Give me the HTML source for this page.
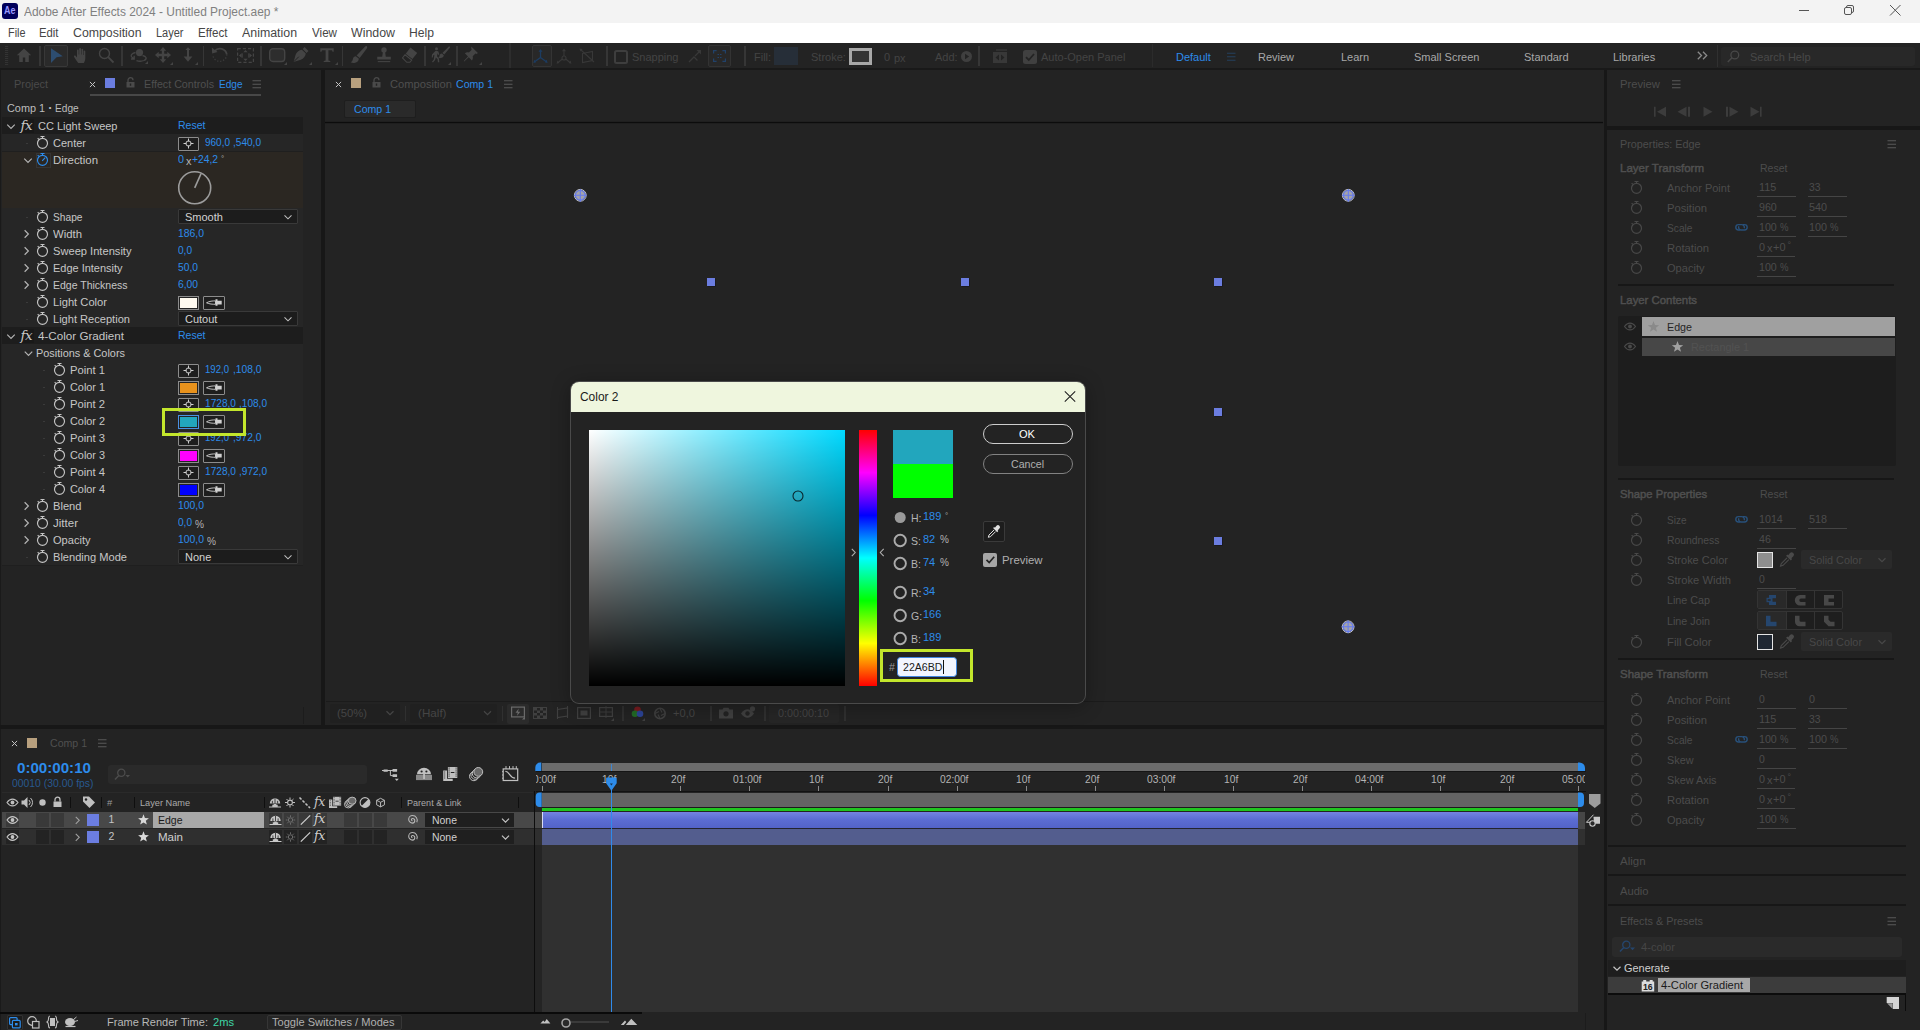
<!DOCTYPE html>
<html lang="en"><head><meta charset="utf-8"><title>Adobe After Effects 2024 - Untitled Project.aep *</title>
<style>
html,body{margin:0;padding:0;}
body{width:1920px;height:1030px;overflow:hidden;background:#232323;position:relative;font-family:"Liberation Sans",sans-serif;font-size:11px;}
#app{position:absolute;left:0;top:0;width:1920px;height:1030px;overflow:hidden;}
#app div,#app span,#app svg{position:absolute;box-sizing:border-box;}
#app svg{overflow:visible;}
.t{white-space:pre;line-height:16px;height:16px;transform-origin:0 50%;transform:scaleX(1);}
.w{white-space:pre;line-height:16px;height:16px;transform-origin:0 50%;}
</style></head><body><div id="app">
<div style="left:0px;top:0px;width:1920px;height:23px;background:#f3f3f3;"></div>
<div style="left:2px;top:3px;width:16px;height:16px;background:#00005b;border-radius:3px;"></div>
<span class="w" style="left:4px;top:3.3000000000000007px;color:#9999ff;font-size:10px;font-weight:700;transform:scaleX(0.9);">Ae</span>
<span class="w" style="left:24px;top:3.5px;color:#808080;font-size:12px;transform:scaleX(0.994);">Adobe After Effects 2024 - Untitled Project.aep *</span>
<svg style="left:1794px;top:0px;" width="120" height="23" viewBox="0 0 120 23"><path d="M5 10.5h10" stroke="#555" stroke-width="1"/><rect x="50.5" y="7.5" width="7" height="7" rx="1.5" fill="none" stroke="#555" stroke-width="1"/><path d="M52.5 7.5v-.5a1.5 1.5 0 0 1 1.5-1.5h4a1.5 1.5 0 0 1 1.5 1.5v4a1.5 1.5 0 0 1-1.5 1.5h-.5" fill="none" stroke="#555" stroke-width="1"/><path d="M96 5l10.5 10.5M106.5 5l-10.5 10.5" stroke="#555" stroke-width="1"/></svg>
<div style="left:0px;top:23px;width:1920px;height:20px;background:#ffffff;"></div>
<span class="w" style="left:7.5px;top:24.5px;color:#464646;font-size:12px;transform:scaleX(0.905);">File</span>
<span class="w" style="left:39px;top:24.5px;color:#464646;font-size:12px;transform:scaleX(0.943);">Edit</span>
<span class="w" style="left:73px;top:24.5px;color:#464646;font-size:12px;transform:scaleX(1.027);">Composition</span>
<span class="w" style="left:156px;top:24.5px;color:#464646;font-size:12px;transform:scaleX(0.916);">Layer</span>
<span class="w" style="left:198px;top:24.5px;color:#464646;font-size:12px;transform:scaleX(0.968);">Effect</span>
<span class="w" style="left:242px;top:24.5px;color:#464646;font-size:12px;transform:scaleX(1.031);">Animation</span>
<span class="w" style="left:312px;top:24.5px;color:#464646;font-size:12px;transform:scaleX(0.969);">View</span>
<span class="w" style="left:351px;top:24.5px;color:#464646;font-size:12px;transform:scaleX(1.031);">Window</span>
<span class="w" style="left:409px;top:24.5px;color:#464646;font-size:12px;transform:scaleX(1.013);">Help</span>
<div style="left:0px;top:43px;width:1920px;height:24.5px;background:#232323;"></div>
<div style="left:0px;top:67.5px;width:1920px;height:2.5px;background:#191919;"></div>
<svg style="left:5px;top:46px;" width="4" height="20" viewBox="0 0 4 20"><path d="M0 .5h3.2M0 2.5h3.2M0 4.5h3.2M0 6.5h3.2M0 8.5h3.2M0 10.5h3.2M0 12.5h3.2M0 14.5h3.2M0 16.5h3.2M0 18.5h3.2" stroke="#333" stroke-width="1"/></svg>
<div style="left:39.25px;top:46px;width:1.5px;height:19.5px;background:#363636;"></div>
<div style="left:121.25px;top:46px;width:1.5px;height:19.5px;background:#363636;"></div>
<div style="left:202.75px;top:46px;width:1.5px;height:19.5px;background:#363636;"></div>
<div style="left:260.25px;top:46px;width:1.5px;height:19.5px;background:#363636;"></div>
<div style="left:341.75px;top:46px;width:1.5px;height:19.5px;background:#363636;"></div>
<div style="left:424.25px;top:46px;width:1.5px;height:19.5px;background:#363636;"></div>
<div style="left:456.25px;top:46px;width:1.5px;height:19.5px;background:#363636;"></div>
<div style="left:606.25px;top:46px;width:1.5px;height:19.5px;background:#363636;"></div>
<div style="left:744.25px;top:46px;width:1.5px;height:19.5px;background:#363636;"></div>
<div style="left:978.25px;top:46px;width:1.5px;height:19.5px;background:#363636;"></div>
<div style="left:509px;top:43px;width:2px;height:24.5px;background:#2d2d2d;"></div>
<svg style="left:16px;top:47px;" width="16" height="16" viewBox="0 0 16 16"><path d="M8 1.5L.8 8.3h2.4V15h3.6v-4.4h2.4V15h3.6V8.3h2.4z" fill="#444444"/></svg>
<div style="left:44px;top:44.5px;width:23.5px;height:22px;background:#2a2a2a;border:1px solid #383838;border-radius:2px;"></div>
<svg style="left:50px;top:47px;" width="14" height="17" viewBox="0 0 14 17"><path d="M1 1.2L12.8 9.2L6.6 10.2L1 16z" fill="#2d4d70"/></svg>
<svg style="left:73px;top:47px;" width="16" height="17" viewBox="0 0 16 17"><path d="M5.2 16c-1.2-1.6-3.2-4.2-4.2-6.2-.5-1 .8-1.9 1.6-1l1.4 1.6V3.4c0-1.2 1.7-1.2 1.7 0V7.6h.5V1.9c0-1.2 1.8-1.2 1.8 0V7.6h.5V2.6c0-1.2 1.7-1.2 1.7 0v5.4h.5V4.4c0-1.2 1.6-1.2 1.6 0v6.6c0 2-.7 3.6-1.5 5z" fill="#444444"/></svg>
<svg style="left:98px;top:47px;" width="17" height="17" viewBox="0 0 17 17"><circle cx="6.5" cy="6.5" r="5" fill="none" stroke="#444444" stroke-width="1.4"/><path d="M10.2 10.2l5.3 5.3" stroke="#444444" stroke-width="1.8"/></svg>
<svg style="left:129px;top:48px;" width="19" height="16" viewBox="0 0 19 16"><circle cx="10.5" cy="4.6" r="3.6" fill="#444444"/><path d="M6.5 4.5C2.5 5.5 1 7.5 3 9.3l2.2 1.5M5.2 7.8v3.2H2" fill="none" stroke="#444444" stroke-width="1.3"/><path d="M13.5 7.5c4 .6 5 3.5 1.5 5-2 .8-5.5.8-7.5.2" fill="none" stroke="#444444" stroke-width="1.3"/><path d="M19 16v-3l-3 3z" fill="#444444"/></svg>
<svg style="left:155px;top:47px;" width="18" height="18" viewBox="0 0 18 18"><path d="M8 0l3.200 3.700H9.200v3.100h3.100V4.800L16 8l-3.700 3.200V9.200H9.200v3.100h2L8 16l-3.200-3.700h2V9.200H3.700v2L0 8l3.700-3.200v2h3.100V3.700h-2z" fill="#444444"/><path d="M18 18v-3l-3 3z" fill="#444444"/></svg>
<svg style="left:181px;top:47px;" width="17" height="18" viewBox="0 0 17 18"><path d="M7 .3l2.600 2.700H8v6.400h3.400L7 14.800 2.600 9.400H6V3H4.400z" fill="#444444"/><path d="M17 18v-3l-3 3z" fill="#444444"/></svg>
<svg style="left:211px;top:46px;" width="18" height="18" viewBox="0 0 18 18"><path d="M3.600 5A7 7 0 0 1 15.800 8.500" fill="none" stroke="#444444" stroke-width="1.700"/><path d="M15.800 8.500a7 7 0 0 1-13.800 1.500" fill="none" stroke="#3a3a3a" stroke-width="1.300" stroke-dasharray="1.300 1.700"/><path d="M.8 1.600l.4 6 5.400-1.600z" fill="#444444"/></svg>
<svg style="left:237px;top:48px;" width="17" height="15" viewBox="0 0 17 15"><rect x=".6" y=".6" width="15.800" height="13.800" fill="none" stroke="#444444" stroke-width="1.200" stroke-dasharray="3.200 2"/><path d="M8.500 2l2.200 2.300h-4.400zM8.500 13l2.200-2.300h-4.400zM2 7.500l2.600-2.200v4.400zM15 7.500l-2.600-2.200v4.400z" fill="#444444"/><path d="M5.200 5.300v4.400M11.800 5.300v4.400" stroke="#444444" stroke-width="1"/></svg>
<svg style="left:269px;top:48px;" width="18" height="17" viewBox="0 0 18 17"><rect x=".7" y=".7" width="15" height="12.800" rx="3.200" fill="#2d2d2d" stroke="#444444" stroke-width="1.400"/><path d="M18 17v-3l-3 3z" fill="#444444"/></svg>
<svg style="left:293px;top:46px;" width="19" height="19" viewBox="0 0 19 19"><path d="M11.6 1l3.9 3.9-2 2-3.9-3.9z" fill="#444444"/><path d="M8.9 3.7l3.9 3.9c-.4 3-2.2 5.2-5 6.2L.6 15.9l2-7.1c1-2.8 3.2-4.6 6.3-5.1z" fill="#444444"/><path d="M.8 15.7l5-5" stroke="#232323" stroke-width="1"/><path d="M19 19v-3l-3 3z" fill="#444444"/></svg>
<svg style="left:320px;top:48px;" width="18" height="17" viewBox="0 0 18 17"><path d="M.3 .3h13.400v3.400h-1.200l-.5-1.400H8.400v10.200l1.900.5v1.100H3.700v-1.100l1.900-.5V2.300H2l-.5 1.400H.3z" fill="#444444"/><path d="M18 17v-3l-3 3z" fill="#444444"/></svg>
<svg style="left:350px;top:46px;" width="18" height="18" viewBox="0 0 18 18"><path d="M16.800.3c.7.600.5 1.400 0 2.100L9.700 12.100 6.600 9.500 14.900.8c.600-.700 1.300-.900 1.900-.5z" fill="#444444"/><path d="M5.800 10.200l3.100 2.600c-.3 2.400-2.200 3.900-4.600 4.100-1.300.1-2.600-.1-3.700-.7 1.400-.6 2-1.700 2.200-3 .2-1.700 1.400-2.900 3-3z" fill="#444444"/></svg>
<svg style="left:376px;top:47px;" width="16" height="17" viewBox="0 0 16 17"><circle cx="8" cy="3" r="2.700" fill="#444444"/><path d="M6.900 5h2.200l.7 4.700h5v2.900H1.200V9.700h5z" fill="#444444"/><path d="M1.800 14.600h12.400" stroke="#444444" stroke-width="1.100"/></svg>
<svg style="left:401px;top:47px;" width="17" height="16" viewBox="0 0 17 16"><path d="M9.500.6l6.700 5.300-4.800 6.200L4.700 6.800z" fill="#444444"/><path d="M4 7.700l6.700 5.300-1.800 2.300H5.800L1.500 11z" fill="none" stroke="#444444" stroke-width="1.100"/></svg>
<svg style="left:431px;top:46px;" width="20" height="19" viewBox="0 0 20 19"><circle cx="5.500" cy="2.800" r="1.500" fill="#444444"/><path d="M4.600 4.800l2.600.4 1.200 3.200-1 .5-.8-1.600-.6 3 2 2.400.3 3.600h-1.400l-.3-3-1.800-1.800-.7 2.600-2.100 2.400-1-.8 1.800-2.200.6-4.800-1.300.7-.3 2.200-1.100-.1.300-2.900z" fill="#444444"/><path d="M18.800.6c.5.500.3 1-.1 1.500l-5.400 6.300-1.900-1.500L17.500.8c.4-.4.900-.6 1.300-.2z" fill="#444444"/><path d="M10.900 7.600l1.900 1.600c-.2 1.700-1.500 2.700-3.100 2.900-.9.100-1.800-.1-2.600-.5 1-.4 1.400-1.200 1.500-2.100.2-1.100 1-1.900 2.300-1.900z" fill="#444444"/><path d="M20 19v-3l-3 3z" fill="#444444"/></svg>
<svg style="left:463px;top:46px;" width="19" height="19" viewBox="0 0 19 19"><path d="M8.300.6l6.600 6.500-1.200.8-1.300-.4-2.700 2.800c.5 1.500.2 2.900-.8 4.100L5.700 11.200 1.200 15.500l-.5-.5L5 10.500 1.800 7.300c1.200-1 2.600-1.300 4.100-.8l2.800-2.700-.4-1.300z" fill="#444444"/><path d="M19 19v-3l-3 3z" fill="#444444"/></svg>
<div style="left:531.5px;top:44.5px;width:20px;height:22px;background:#282828;border:1px solid #343434;border-radius:2px;"></div>
<svg style="left:533px;top:49px;" width="15" height="15" viewBox="0 0 15 15"><path d="M7.500 1.500v7M7.500 8.500l-5.500 4M7.500 8.500l5.500 4" stroke="#1c3c62" stroke-width="1.300" fill="none"/><path d="M7.500 0l2 2.800H5.500zM.4 14l.9-3.300 2 2.500zM14.600 14l-.9-3.300-2 2.500z" fill="#1c3c62"/></svg>
<svg style="left:556px;top:48px;" width="16" height="18" viewBox="0 0 16 18"><g transform="translate(0 0.5)"><path d="M8 1.500v6M6.300 10.500l-4.300 3.500M9.700 10.500l4.300 3.500" stroke="#383838" stroke-width="1.100" fill="none"/><circle cx="8" cy="9.500" r="2" fill="none" stroke="#383838" stroke-width="1.100"/><path d="M8 0l2 2.800H6zM.6 15.200l.8-3.300 2 2.500zM15.400 15.200l-.8-3.300-2 2.500z" fill="#383838"/></g></svg>
<svg style="left:579px;top:48px;" width="17" height="17" viewBox="0 0 17 17"><path d="M3.500 5.500l10-2v9l-10 2z" fill="none" stroke="#383838" stroke-width="1.100"/><path d="M1.500 1.500l13.500 12.500" stroke="#383838" stroke-width="1.100"/><path d="M.5.500l3.200.6-2.400 2.400z" fill="#383838"/></svg>
<div style="left:614px;top:50px;width:13.5px;height:13.5px;border:2px solid #3e3e3e;border-radius:2.500px;"></div>
<span class="t" style="left:632px;top:49.0px;color:#444;">Snapping</span>
<svg style="left:688px;top:49px;" width="14" height="14" viewBox="0 0 14 14"><path d="M1 13l5-5 3.500 3.500" fill="none" stroke="#383838" stroke-width="1.300"/><path d="M7 7l5-5" stroke="#383838" stroke-width="1.300"/><path d="M13 1v4.500L8.500 1z" fill="#383838"/></svg>
<div style="left:708px;top:45px;width:22.5px;height:22px;background:#282828;border:1px solid #333;border-radius:2px;"></div>
<svg style="left:713px;top:50px;" width="13" height="12" viewBox="0 0 13 12"><path d="M.6 3.500V.6h3M9.400.6h3v2.900M12.400 8.500v2.900h-3M3.600 11.400h-3V8.500" fill="none" stroke="#21426a" stroke-width="1.200"/><path d="M4.500 4.500h1.500M7 4.500h1.500M4.500 7.500h1.500M7 7.500h1.500" stroke="#21426a" stroke-width="1.200"/></svg>
<span class="t" style="left:754px;top:49.0px;color:#444;">Fill:</span>
<div style="left:774px;top:47px;width:24px;height:18px;background:#262e38;"></div>
<span class="t" style="left:811px;top:49.0px;color:#444;">Stroke:</span>
<div style="left:849px;top:48px;width:23px;height:17px;background:#343434;border:3px solid #a8a8a8;"></div>
<span class="t" style="left:884px;top:48.5px;color:#444;">0</span>
<span class="t" style="left:894px;top:49.5px;color:#444;">px</span>
<span class="t" style="left:935px;top:49.0px;color:#444;">Add:</span>
<svg style="left:961px;top:51px;" width="12" height="12" viewBox="0 0 12 12"><circle cx="5.500" cy="5.500" r="5.500" fill="#3f3f3f"/><path d="M4 2.800v5.400l4.200-2.700z" fill="#232323"/></svg>
<svg style="left:993px;top:49px;" width="14" height="14" viewBox="0 0 14 14"><path d="M0 3h14v11H0z" fill="#383838"/><path d="M3 0h11v2H3z" fill="#303030"/><path d="M6 5.500v6L2.500 8.500zM8 5.500v6l3.500-3z" fill="#232323"/></svg>
<div style="left:1023px;top:50px;width:14px;height:14px;background:#404040;border-radius:2.500px;"></div>
<svg style="left:1023px;top:50px;" width="14" height="14" viewBox="0 0 14 14"><path d="M3 7.200l2.800 2.800 5.200-6" fill="none" stroke="#232323" stroke-width="1.800"/></svg>
<span class="t" style="left:1041px;top:49.0px;color:#444;">Auto-Open Panel</span>
<div style="left:1152px;top:44px;width:1px;height:23px;background:#2b2b2b;"></div>
<span class="t" style="left:1176px;top:49.0px;color:#2d8ceb;">Default</span>
<svg style="left:1227px;top:52px;" width="9" height="10" viewBox="0 0 9 10"><g transform="translate(0 0.3)"><path d="M0 1h8.5M0 4.5h8.5M0 8h8.5" stroke="#24405e" stroke-width="1.1"/></g></svg>
<span class="t" style="left:1258px;top:49.0px;color:#a8a8a8;">Review</span>
<span class="t" style="left:1341px;top:49.0px;color:#a8a8a8;">Learn</span>
<span class="t" style="left:1414px;top:49.0px;color:#a8a8a8;">Small Screen</span>
<span class="t" style="left:1524px;top:49.0px;color:#a8a8a8;">Standard</span>
<span class="t" style="left:1613px;top:49.0px;color:#a8a8a8;">Libraries</span>
<svg style="left:1697px;top:51px;" width="11" height="9" viewBox="0 0 11 9"><path d="M.8.800l3.700 3.700-3.700 3.700M6 .800l3.700 3.700L6 8.200" fill="none" stroke="#8a8a8a" stroke-width="1.300"/></svg>
<div style="left:1716.5px;top:45px;width:1.5px;height:22px;background:#303030;"></div>
<div style="left:1721px;top:47px;width:194px;height:19px;background:#282828;border-radius:3px;"></div>
<svg style="left:1727px;top:50px;" width="13" height="13" viewBox="0 0 13 13"><circle cx="7.800" cy="5" r="3.900" fill="none" stroke="#484848" stroke-width="1.300"/><path d="M5 7.800L.8 12" stroke="#484848" stroke-width="1.500"/></svg>
<span class="t" style="left:1750px;top:49.0px;color:#484848;">Search Help</span>
<div style="left:0px;top:70px;width:1px;height:655px;background:#1a1a1a;"></div>
<div style="left:321px;top:70px;width:4px;height:655px;background:#171717;"></div>
<span class="t" style="left:14px;top:76.0px;color:#4a4a4a;transform:scaleX(0.993);">Project</span>
<svg style="left:89px;top:81px;" width="7" height="7" viewBox="0 0 7 7"><g transform="translate(0.5 0.5)"><path d="M.4 .4l5.200 5.200M5.600 .4L.4 5.600" stroke="#c4c4c4" stroke-width="1"/></g></svg>
<div style="left:105px;top:78px;width:10px;height:10px;background:#6b7de0;"></div>
<svg style="left:126px;top:77px;" width="9" height="11" viewBox="0 0 9 11"><path d="M2 5V3.200a2.500 2.500 0 0 1 5 0" fill="none" stroke="#4a4a4a" stroke-width="1.300"/><path d="M.5 5h8v5.500h-8z" fill="#4a4a4a"/><path d="M3.800 6.500h1.400v2.300H3.800z" fill="#232323"/></svg>
<span class="t" style="left:144px;top:76.0px;color:#4f4f4f;transform:scaleX(0.973);">Effect Controls</span>
<span class="t" style="left:218.5px;top:76.0px;color:#2d8ceb;transform:scaleX(0.915);">Edge</span>
<svg style="left:252px;top:79px;" width="9" height="10" viewBox="0 0 9 10"><g transform="translate(0.5 0.8)"><path d="M0 1h8.5M0 4.5h8.5M0 8h8.5" stroke="#5a5a5a" stroke-width="1.1"/></g></svg>
<div style="left:90px;top:94px;width:171px;height:2px;background:#484848;"></div>
<span class="t" style="left:7px;top:100.0px;color:#bdbdbd;transform:scaleX(0.987);">Comp 1</span>
<span class="t" style="left:48.3px;top:99.5px;color:#bdbdbd;font-size:13px;font-weight:700;">·</span>
<span class="t" style="left:55px;top:100.0px;color:#bdbdbd;transform:scaleX(0.923);">Edge</span>
<div style="left:2px;top:117.4px;width:301px;height:448.6px;background:#1f1f1f;"></div>
<div style="left:2px;top:117.4px;width:301px;height:17px;background:#1d1d1d;"></div>
<svg style="left:6px;top:123px;" width="10" height="7" viewBox="0 0 10 7"><g transform="translate(0.25 0.625)"><path d="M1 1l3.75 3.75l3.75 -3.75" fill="none" stroke="#b4b4b4" stroke-width="1.2"/></g></svg>
<div style="left:19.5px;top:119px;width:14px;height:13.5px;background:#191919;"></div>
<span class="w" style="left:20.5px;top:116.5px;color:#c8c8c8;font-family:'DejaVu Serif',serif;font-style:italic;font-size:13.5px;letter-spacing:-0.4px;line-height:16px;">fx</span>
<span class="t" style="left:38px;top:118.0px;color:#c6c6c6;">CC Light Sweep</span>
<span class="t" style="left:178px;top:117.4px;color:#2d8ceb;transform:scaleX(0.957);">Reset</span>
<div style="left:2px;top:134.4px;width:301px;height:16.3px;background:#262626;"></div>
<div style="left:26.3px;top:142.8px;width:1.5px;height:1.5px;background:#3a3a3a;"></div>
<svg style="left:35px;top:135px;" width="15" height="16" viewBox="0 0 15 16"><g transform="translate(0.5 0)"><circle cx="7" cy="8.300" r="5" fill="none" stroke="#c4c4c4" stroke-width="1.15"/><path d="M5 1.500h4M7 1.500v1.900" stroke="#c4c4c4" stroke-width="1.15" fill="none"/><path d="M2.200 3.200l1.100 1.100" stroke="#c4c4c4" stroke-width="1.15" fill="none"/></g></svg>
<span class="t" style="left:53px;top:135.0px;color:#c6c6c6;">Center</span>
<div style="left:177.5px;top:136.5px;width:21.5px;height:14px;background:#1e1e1e;border:1px solid #8c8c8c;border-radius:1px;"></div>
<svg style="left:183px;top:138px;" width="11" height="11" viewBox="0 0 11 11"><g transform="translate(0.0 0.5)"><circle cx="5.500" cy="5" r="2.600" fill="none" stroke="#d0d0d0" stroke-width="1"/><path d="M5.500 0v3M5.500 7v3M.5 5h3M7.500 5h3" stroke="#d0d0d0" stroke-width="1"/></g></svg>
<span class="t" style="left:205px;top:133.9px;color:#2d8ceb;transform:scaleX(0.908);">960,0</span>
<span class="t" style="left:233px;top:133.9px;color:#2d8ceb;transform:scaleX(0.916);">,540,0</span>
<div style="left:2px;top:152px;width:301px;height:56.5px;background:#2b2722;"></div>
<svg style="left:23px;top:157px;" width="10" height="7" viewBox="0 0 10 7"><g transform="translate(0.25 0.625)"><path d="M1 1l3.75 3.75l3.75 -3.75" fill="none" stroke="#b4b4b4" stroke-width="1.2"/></g></svg>
<div style="left:35.5px;top:152.5px;width:15px;height:15px;border:1px solid #353535;"></div>
<svg style="left:35px;top:152px;" width="15" height="16" viewBox="0 0 15 16"><g transform="translate(0.5 0)"><circle cx="7" cy="8.300" r="5" fill="none" stroke="#2d8ceb" stroke-width="1.15"/><path d="M5 1.500h4M7 1.500v1.900" stroke="#2d8ceb" stroke-width="1.15" fill="none"/><path d="M2.200 3.200l1.100 1.100" stroke="#2d8ceb" stroke-width="1.15" fill="none"/></g></svg>
<svg style="left:39px;top:157px;" width="8" height="8" viewBox="0 0 8 8"><path d="M3.200 3.900l3-3.200" stroke="#2d8ceb" stroke-width="1.100"/></svg>
<span class="t" style="left:53px;top:152.0px;color:#c6c6c6;transform:scaleX(1.037);">Direction</span>
<span class="t" style="left:178px;top:150.9px;color:#2d8ceb;transform:scaleX(0.981);">0</span>
<span class="t" style="left:186px;top:152.5px;color:#b4b4b4;">x</span>
<span class="t" style="left:192px;top:150.9px;color:#2d8ceb;transform:scaleX(0.934);">+24,2</span>
<span class="t" style="left:221px;top:151.0px;color:#b4b4b4;font-size:8px;">°</span>
<svg style="left:177px;top:170px;" width="36" height="36" viewBox="0 0 36 36"><circle cx="17.700" cy="17.800" r="16" fill="none" stroke="#9c9c9c" stroke-width="1.600"/><path d="M17.700 17.800L24.05 3.66" stroke="#9c9c9c" stroke-width="1.600"/></svg>
<div style="left:2px;top:208.4px;width:301px;height:16.3px;background:#262626;"></div>
<div style="left:26.3px;top:216.8px;width:1.5px;height:1.5px;background:#3a3a3a;"></div>
<svg style="left:35px;top:209px;" width="15" height="16" viewBox="0 0 15 16"><g transform="translate(0.5 0)"><circle cx="7" cy="8.300" r="5" fill="none" stroke="#c4c4c4" stroke-width="1.15"/><path d="M5 1.500h4M7 1.500v1.900" stroke="#c4c4c4" stroke-width="1.15" fill="none"/><path d="M2.200 3.200l1.100 1.100" stroke="#c4c4c4" stroke-width="1.15" fill="none"/></g></svg>
<span class="t" style="left:53px;top:209.0px;color:#c6c6c6;transform:scaleX(0.927);">Shape</span>
<div style="left:177.5px;top:209.2px;width:120px;height:15.3px;background:#1c1c1c;border:1px solid #393939;border-radius:1px;"></div>
<span class="t" style="left:185.0px;top:209.0px;color:#d2d2d2;">Smooth</span>
<svg style="left:283px;top:214px;" width="10" height="6" viewBox="0 0 10 6"><g transform="translate(0.5 0.35)"><path d="M1 1l3.5 3.5l3.5 -3.5" fill="none" stroke="#c0c0c0" stroke-width="1.05"/></g></svg>
<div style="left:2px;top:225.4px;width:301px;height:16.3px;background:#262626;"></div>
<svg style="left:23px;top:229px;" width="7" height="10" viewBox="0 0 7 10"><g transform="translate(0.625 0.25)"><path d="M1 1l3.75 3.75l-3.75 3.75" fill="none" stroke="#b4b4b4" stroke-width="1.2"/></g></svg>
<svg style="left:35px;top:226px;" width="15" height="16" viewBox="0 0 15 16"><g transform="translate(0.5 0)"><circle cx="7" cy="8.300" r="5" fill="none" stroke="#c4c4c4" stroke-width="1.15"/><path d="M5 1.500h4M7 1.500v1.900" stroke="#c4c4c4" stroke-width="1.15" fill="none"/><path d="M2.200 3.200l1.100 1.100" stroke="#c4c4c4" stroke-width="1.15" fill="none"/></g></svg>
<span class="t" style="left:53px;top:226.0px;color:#c6c6c6;transform:scaleX(1.031);">Width</span>
<span class="t" style="left:178px;top:224.9px;color:#2d8ceb;transform:scaleX(0.945);">186,0</span>
<div style="left:2px;top:242.4px;width:301px;height:16.3px;background:#262626;"></div>
<svg style="left:23px;top:246px;" width="7" height="10" viewBox="0 0 7 10"><g transform="translate(0.625 0.25)"><path d="M1 1l3.75 3.75l-3.75 3.75" fill="none" stroke="#b4b4b4" stroke-width="1.2"/></g></svg>
<svg style="left:35px;top:243px;" width="15" height="16" viewBox="0 0 15 16"><g transform="translate(0.5 0)"><circle cx="7" cy="8.300" r="5" fill="none" stroke="#c4c4c4" stroke-width="1.15"/><path d="M5 1.500h4M7 1.500v1.900" stroke="#c4c4c4" stroke-width="1.15" fill="none"/><path d="M2.200 3.200l1.100 1.100" stroke="#c4c4c4" stroke-width="1.15" fill="none"/></g></svg>
<span class="t" style="left:53px;top:243.0px;color:#c6c6c6;transform:scaleX(1.011);">Sweep Intensity</span>
<span class="t" style="left:178px;top:241.9px;color:#2d8ceb;transform:scaleX(0.916);">0,0</span>
<div style="left:2px;top:259.4px;width:301px;height:16.3px;background:#262626;"></div>
<svg style="left:23px;top:263px;" width="7" height="10" viewBox="0 0 7 10"><g transform="translate(0.625 0.25)"><path d="M1 1l3.75 3.75l-3.75 3.75" fill="none" stroke="#b4b4b4" stroke-width="1.2"/></g></svg>
<svg style="left:35px;top:260px;" width="15" height="16" viewBox="0 0 15 16"><g transform="translate(0.5 0)"><circle cx="7" cy="8.300" r="5" fill="none" stroke="#c4c4c4" stroke-width="1.15"/><path d="M5 1.500h4M7 1.500v1.900" stroke="#c4c4c4" stroke-width="1.15" fill="none"/><path d="M2.200 3.200l1.100 1.100" stroke="#c4c4c4" stroke-width="1.15" fill="none"/></g></svg>
<span class="t" style="left:53px;top:260.0px;color:#c6c6c6;transform:scaleX(0.997);">Edge Intensity</span>
<span class="t" style="left:178px;top:258.9px;color:#2d8ceb;transform:scaleX(0.934);">50,0</span>
<div style="left:2px;top:276.4px;width:301px;height:16.3px;background:#262626;"></div>
<svg style="left:23px;top:280px;" width="7" height="10" viewBox="0 0 7 10"><g transform="translate(0.625 0.25)"><path d="M1 1l3.75 3.75l-3.75 3.75" fill="none" stroke="#b4b4b4" stroke-width="1.2"/></g></svg>
<svg style="left:35px;top:277px;" width="15" height="16" viewBox="0 0 15 16"><g transform="translate(0.5 0)"><circle cx="7" cy="8.300" r="5" fill="none" stroke="#c4c4c4" stroke-width="1.15"/><path d="M5 1.500h4M7 1.500v1.900" stroke="#c4c4c4" stroke-width="1.15" fill="none"/><path d="M2.200 3.200l1.100 1.100" stroke="#c4c4c4" stroke-width="1.15" fill="none"/></g></svg>
<span class="t" style="left:53px;top:277.0px;color:#c6c6c6;transform:scaleX(0.954);">Edge Thickness</span>
<span class="t" style="left:178px;top:275.9px;color:#2d8ceb;transform:scaleX(0.934);">6,00</span>
<div style="left:2px;top:293.4px;width:301px;height:16.3px;background:#262626;"></div>
<div style="left:26.3px;top:301.8px;width:1.5px;height:1.5px;background:#3a3a3a;"></div>
<svg style="left:35px;top:294px;" width="15" height="16" viewBox="0 0 15 16"><g transform="translate(0.5 0)"><circle cx="7" cy="8.300" r="5" fill="none" stroke="#c4c4c4" stroke-width="1.15"/><path d="M5 1.500h4M7 1.500v1.900" stroke="#c4c4c4" stroke-width="1.15" fill="none"/><path d="M2.200 3.200l1.100 1.100" stroke="#c4c4c4" stroke-width="1.15" fill="none"/></g></svg>
<span class="t" style="left:53px;top:294.0px;color:#c6c6c6;transform:scaleX(1.015);">Light Color</span>
<div style="left:177.5px;top:295.5px;width:21.5px;height:14px;background:#fffaf0;border:1px solid #8c8c8c;box-shadow:inset 0 0 0 1px #232323;"></div>
<div style="left:203px;top:295.5px;width:22px;height:14px;background:#1e1e1e;border:1px solid #8c8c8c;border-radius:1px;"></div>
<svg style="left:205px;top:298px;" width="18" height="9" viewBox="0 0 18 9"><g transform="translate(0.5 0.5)"><path d="M1 4.300C4 2.600 7 2.400 10 2.400v3.400C7 5.800 4 5.600 1 4.300z" fill="none" stroke="#d0d0d0" stroke-width=".9"/><path d="M10 .800h2v6.500h-2zM12 2.200h4.200v3.800H12z" fill="#d0d0d0"/></g></svg>
<div style="left:2px;top:310.4px;width:301px;height:16.3px;background:#262626;"></div>
<div style="left:26.3px;top:318.8px;width:1.5px;height:1.5px;background:#3a3a3a;"></div>
<svg style="left:35px;top:311px;" width="15" height="16" viewBox="0 0 15 16"><g transform="translate(0.5 0)"><circle cx="7" cy="8.300" r="5" fill="none" stroke="#c4c4c4" stroke-width="1.15"/><path d="M5 1.500h4M7 1.500v1.900" stroke="#c4c4c4" stroke-width="1.15" fill="none"/><path d="M2.200 3.200l1.100 1.100" stroke="#c4c4c4" stroke-width="1.15" fill="none"/></g></svg>
<span class="t" style="left:53px;top:311.0px;color:#c6c6c6;transform:scaleX(1.007);">Light Reception</span>
<div style="left:177.5px;top:311.2px;width:120px;height:15.3px;background:#1c1c1c;border:1px solid #393939;border-radius:1px;"></div>
<span class="t" style="left:185.0px;top:311.0px;color:#d2d2d2;">Cutout</span>
<svg style="left:283px;top:316px;" width="10" height="6" viewBox="0 0 10 6"><g transform="translate(0.5 0.35)"><path d="M1 1l3.5 3.5l3.5 -3.5" fill="none" stroke="#c0c0c0" stroke-width="1.05"/></g></svg>
<div style="left:2px;top:327.4px;width:301px;height:17px;background:#1d1d1d;"></div>
<svg style="left:6px;top:333px;" width="10" height="7" viewBox="0 0 10 7"><g transform="translate(0.25 0.625)"><path d="M1 1l3.75 3.75l3.75 -3.75" fill="none" stroke="#b4b4b4" stroke-width="1.2"/></g></svg>
<div style="left:19.5px;top:329px;width:14px;height:13.5px;background:#191919;"></div>
<span class="w" style="left:20.5px;top:326.5px;color:#c8c8c8;font-family:'DejaVu Serif',serif;font-style:italic;font-size:13.5px;letter-spacing:-0.4px;line-height:16px;">fx</span>
<span class="t" style="left:38px;top:328.0px;color:#c6c6c6;transform:scaleX(1.058);">4-Color Gradient</span>
<span class="t" style="left:178px;top:327.4px;color:#2d8ceb;transform:scaleX(0.957);">Reset</span>
<div style="left:2px;top:344.4px;width:301px;height:16.3px;background:#262626;"></div>
<svg style="left:23px;top:350px;" width="11" height="7" viewBox="0 0 11 7"><g transform="translate(0.75 0.625)"><path d="M1 1l3.75 3.75l3.75 -3.75" fill="none" stroke="#b4b4b4" stroke-width="1.2"/></g></svg>
<span class="t" style="left:35.5px;top:345.0px;color:#c6c6c6;transform:scaleX(0.99);">Positions &amp; Colors</span>
<div style="left:2px;top:361.4px;width:301px;height:16.3px;background:#262626;"></div>
<div style="left:43.3px;top:369.8px;width:1.5px;height:1.5px;background:#3a3a3a;"></div>
<svg style="left:52px;top:362px;" width="15" height="16" viewBox="0 0 15 16"><g transform="translate(0.5 0)"><circle cx="7" cy="8.300" r="5" fill="none" stroke="#c4c4c4" stroke-width="1.15"/><path d="M5 1.500h4M7 1.500v1.900" stroke="#c4c4c4" stroke-width="1.15" fill="none"/><path d="M2.200 3.200l1.100 1.100" stroke="#c4c4c4" stroke-width="1.15" fill="none"/></g></svg>
<span class="t" style="left:70px;top:362.0px;color:#c6c6c6;transform:scaleX(1.022);">Point 1</span>
<div style="left:177.5px;top:363.5px;width:21.5px;height:14px;background:#1e1e1e;border:1px solid #8c8c8c;border-radius:1px;"></div>
<svg style="left:183px;top:365px;" width="11" height="11" viewBox="0 0 11 11"><g transform="translate(0.0 0.5)"><circle cx="5.500" cy="5" r="2.600" fill="none" stroke="#d0d0d0" stroke-width="1"/><path d="M5.500 0v3M5.500 7v3M.5 5h3M7.500 5h3" stroke="#d0d0d0" stroke-width="1"/></g></svg>
<span class="t" style="left:205px;top:360.9px;color:#2d8ceb;transform:scaleX(0.872);">192,0</span>
<span class="t" style="left:232.5px;top:360.9px;color:#2d8ceb;transform:scaleX(0.932);">,108,0</span>
<div style="left:2px;top:395.4px;width:301px;height:16.3px;background:#262626;"></div>
<div style="left:43.3px;top:403.8px;width:1.5px;height:1.5px;background:#3a3a3a;"></div>
<svg style="left:52px;top:396px;" width="15" height="16" viewBox="0 0 15 16"><g transform="translate(0.5 0)"><circle cx="7" cy="8.300" r="5" fill="none" stroke="#c4c4c4" stroke-width="1.15"/><path d="M5 1.500h4M7 1.500v1.900" stroke="#c4c4c4" stroke-width="1.15" fill="none"/><path d="M2.200 3.200l1.100 1.100" stroke="#c4c4c4" stroke-width="1.15" fill="none"/></g></svg>
<span class="t" style="left:70px;top:396.0px;color:#c6c6c6;transform:scaleX(1.022);">Point 2</span>
<div style="left:177.5px;top:397.5px;width:21.5px;height:14px;background:#1e1e1e;border:1px solid #8c8c8c;border-radius:1px;"></div>
<svg style="left:183px;top:399px;" width="11" height="11" viewBox="0 0 11 11"><g transform="translate(0.0 0.5)"><circle cx="5.500" cy="5" r="2.600" fill="none" stroke="#d0d0d0" stroke-width="1"/><path d="M5.500 0v3M5.500 7v3M.5 5h3M7.500 5h3" stroke="#d0d0d0" stroke-width="1"/></g></svg>
<span class="t" style="left:205px;top:394.9px;color:#2d8ceb;transform:scaleX(0.921);">1728,0</span>
<span class="t" style="left:239px;top:394.9px;color:#2d8ceb;transform:scaleX(0.916);">,108,0</span>
<div style="left:2px;top:429.4px;width:301px;height:16.3px;background:#262626;"></div>
<div style="left:43.3px;top:437.8px;width:1.5px;height:1.5px;background:#3a3a3a;"></div>
<svg style="left:52px;top:430px;" width="15" height="16" viewBox="0 0 15 16"><g transform="translate(0.5 0)"><circle cx="7" cy="8.300" r="5" fill="none" stroke="#c4c4c4" stroke-width="1.15"/><path d="M5 1.500h4M7 1.500v1.900" stroke="#c4c4c4" stroke-width="1.15" fill="none"/><path d="M2.200 3.200l1.100 1.100" stroke="#c4c4c4" stroke-width="1.15" fill="none"/></g></svg>
<span class="t" style="left:70px;top:430.0px;color:#c6c6c6;transform:scaleX(1.022);">Point 3</span>
<div style="left:177.5px;top:431.5px;width:21.5px;height:14px;background:#1e1e1e;border:1px solid #8c8c8c;border-radius:1px;"></div>
<svg style="left:183px;top:433px;" width="11" height="11" viewBox="0 0 11 11"><g transform="translate(0.0 0.5)"><circle cx="5.500" cy="5" r="2.600" fill="none" stroke="#d0d0d0" stroke-width="1"/><path d="M5.500 0v3M5.500 7v3M.5 5h3M7.500 5h3" stroke="#d0d0d0" stroke-width="1"/></g></svg>
<span class="t" style="left:205px;top:428.9px;color:#2d8ceb;transform:scaleX(0.872);">192,0</span>
<span class="t" style="left:232.5px;top:428.9px;color:#2d8ceb;transform:scaleX(0.932);">,972,0</span>
<div style="left:2px;top:463.4px;width:301px;height:16.3px;background:#262626;"></div>
<div style="left:43.3px;top:471.8px;width:1.5px;height:1.5px;background:#3a3a3a;"></div>
<svg style="left:52px;top:464px;" width="15" height="16" viewBox="0 0 15 16"><g transform="translate(0.5 0)"><circle cx="7" cy="8.300" r="5" fill="none" stroke="#c4c4c4" stroke-width="1.15"/><path d="M5 1.500h4M7 1.500v1.900" stroke="#c4c4c4" stroke-width="1.15" fill="none"/><path d="M2.200 3.200l1.100 1.100" stroke="#c4c4c4" stroke-width="1.15" fill="none"/></g></svg>
<span class="t" style="left:70px;top:464.0px;color:#c6c6c6;transform:scaleX(1.022);">Point 4</span>
<div style="left:177.5px;top:465.5px;width:21.5px;height:14px;background:#1e1e1e;border:1px solid #8c8c8c;border-radius:1px;"></div>
<svg style="left:183px;top:467px;" width="11" height="11" viewBox="0 0 11 11"><g transform="translate(0.0 0.5)"><circle cx="5.500" cy="5" r="2.600" fill="none" stroke="#d0d0d0" stroke-width="1"/><path d="M5.500 0v3M5.500 7v3M.5 5h3M7.500 5h3" stroke="#d0d0d0" stroke-width="1"/></g></svg>
<span class="t" style="left:205px;top:462.9px;color:#2d8ceb;transform:scaleX(0.921);">1728,0</span>
<span class="t" style="left:239px;top:462.9px;color:#2d8ceb;transform:scaleX(0.916);">,972,0</span>
<div style="left:2px;top:378.4px;width:301px;height:16.3px;background:#262626;"></div>
<div style="left:43.3px;top:386.8px;width:1.5px;height:1.5px;background:#3a3a3a;"></div>
<svg style="left:52px;top:379px;" width="15" height="16" viewBox="0 0 15 16"><g transform="translate(0.5 0)"><circle cx="7" cy="8.300" r="5" fill="none" stroke="#c4c4c4" stroke-width="1.15"/><path d="M5 1.500h4M7 1.500v1.900" stroke="#c4c4c4" stroke-width="1.15" fill="none"/><path d="M2.200 3.200l1.100 1.100" stroke="#c4c4c4" stroke-width="1.15" fill="none"/></g></svg>
<span class="t" style="left:70px;top:379.0px;color:#c6c6c6;transform:scaleX(0.987);">Color 1</span>
<div style="left:177.5px;top:380.5px;width:21.5px;height:14px;background:#e8921c;border:1px solid #8c8c8c;box-shadow:inset 0 0 0 1px #232323;"></div>
<div style="left:203px;top:380.5px;width:22px;height:14px;background:#1e1e1e;border:1px solid #8c8c8c;border-radius:1px;"></div>
<svg style="left:205px;top:383px;" width="18" height="9" viewBox="0 0 18 9"><g transform="translate(0.5 0.5)"><path d="M1 4.300C4 2.600 7 2.400 10 2.400v3.400C7 5.800 4 5.600 1 4.300z" fill="none" stroke="#d0d0d0" stroke-width=".9"/><path d="M10 .800h2v6.500h-2zM12 2.200h4.200v3.800H12z" fill="#d0d0d0"/></g></svg>
<div style="left:2px;top:412.4px;width:301px;height:16.3px;background:#262626;"></div>
<div style="left:43.3px;top:420.8px;width:1.5px;height:1.5px;background:#3a3a3a;"></div>
<svg style="left:52px;top:413px;" width="15" height="16" viewBox="0 0 15 16"><g transform="translate(0.5 0)"><circle cx="7" cy="8.300" r="5" fill="none" stroke="#c4c4c4" stroke-width="1.15"/><path d="M5 1.500h4M7 1.500v1.900" stroke="#c4c4c4" stroke-width="1.15" fill="none"/><path d="M2.200 3.200l1.100 1.100" stroke="#c4c4c4" stroke-width="1.15" fill="none"/></g></svg>
<span class="t" style="left:70px;top:413.0px;color:#c6c6c6;transform:scaleX(0.987);">Color 2</span>
<div style="left:177.5px;top:414.5px;width:21.5px;height:14px;background:#22a6bd;border:1px solid #4a90e2;box-shadow:inset 0 0 0 1px #232323;"></div>
<div style="left:203px;top:414.5px;width:22px;height:14px;background:#1e1e1e;border:1px solid #8c8c8c;border-radius:1px;"></div>
<svg style="left:205px;top:417px;" width="18" height="9" viewBox="0 0 18 9"><g transform="translate(0.5 0.5)"><path d="M1 4.300C4 2.600 7 2.400 10 2.400v3.400C7 5.800 4 5.600 1 4.300z" fill="none" stroke="#d0d0d0" stroke-width=".9"/><path d="M10 .800h2v6.500h-2zM12 2.200h4.200v3.800H12z" fill="#d0d0d0"/></g></svg>
<div style="left:2px;top:446.4px;width:301px;height:16.3px;background:#262626;"></div>
<div style="left:43.3px;top:454.8px;width:1.5px;height:1.5px;background:#3a3a3a;"></div>
<svg style="left:52px;top:447px;" width="15" height="16" viewBox="0 0 15 16"><g transform="translate(0.5 0)"><circle cx="7" cy="8.300" r="5" fill="none" stroke="#c4c4c4" stroke-width="1.15"/><path d="M5 1.500h4M7 1.500v1.900" stroke="#c4c4c4" stroke-width="1.15" fill="none"/><path d="M2.200 3.200l1.100 1.100" stroke="#c4c4c4" stroke-width="1.15" fill="none"/></g></svg>
<span class="t" style="left:70px;top:447.0px;color:#c6c6c6;transform:scaleX(0.987);">Color 3</span>
<div style="left:177.5px;top:448.5px;width:21.5px;height:14px;background:#ff00ff;border:1px solid #8c8c8c;box-shadow:inset 0 0 0 1px #232323;"></div>
<div style="left:203px;top:448.5px;width:22px;height:14px;background:#1e1e1e;border:1px solid #8c8c8c;border-radius:1px;"></div>
<svg style="left:205px;top:451px;" width="18" height="9" viewBox="0 0 18 9"><g transform="translate(0.5 0.5)"><path d="M1 4.300C4 2.600 7 2.400 10 2.400v3.400C7 5.800 4 5.600 1 4.300z" fill="none" stroke="#d0d0d0" stroke-width=".9"/><path d="M10 .800h2v6.500h-2zM12 2.200h4.200v3.800H12z" fill="#d0d0d0"/></g></svg>
<div style="left:2px;top:480.4px;width:301px;height:16.3px;background:#262626;"></div>
<div style="left:43.3px;top:488.8px;width:1.5px;height:1.5px;background:#3a3a3a;"></div>
<svg style="left:52px;top:481px;" width="15" height="16" viewBox="0 0 15 16"><g transform="translate(0.5 0)"><circle cx="7" cy="8.300" r="5" fill="none" stroke="#c4c4c4" stroke-width="1.15"/><path d="M5 1.500h4M7 1.500v1.900" stroke="#c4c4c4" stroke-width="1.15" fill="none"/><path d="M2.200 3.200l1.100 1.100" stroke="#c4c4c4" stroke-width="1.15" fill="none"/></g></svg>
<span class="t" style="left:70px;top:481.0px;color:#c6c6c6;transform:scaleX(0.987);">Color 4</span>
<div style="left:177.5px;top:482.5px;width:21.5px;height:14px;background:#0000ff;border:1px solid #8c8c8c;box-shadow:inset 0 0 0 1px #232323;"></div>
<div style="left:203px;top:482.5px;width:22px;height:14px;background:#1e1e1e;border:1px solid #8c8c8c;border-radius:1px;"></div>
<svg style="left:205px;top:485px;" width="18" height="9" viewBox="0 0 18 9"><g transform="translate(0.5 0.5)"><path d="M1 4.300C4 2.600 7 2.400 10 2.400v3.400C7 5.800 4 5.600 1 4.300z" fill="none" stroke="#d0d0d0" stroke-width=".9"/><path d="M10 .800h2v6.500h-2zM12 2.200h4.200v3.800H12z" fill="#d0d0d0"/></g></svg>
<div style="left:2px;top:497.4px;width:301px;height:16.3px;background:#262626;"></div>
<svg style="left:23px;top:501px;" width="7" height="10" viewBox="0 0 7 10"><g transform="translate(0.625 0.25)"><path d="M1 1l3.75 3.75l-3.75 3.75" fill="none" stroke="#b4b4b4" stroke-width="1.2"/></g></svg>
<svg style="left:35px;top:498px;" width="15" height="16" viewBox="0 0 15 16"><g transform="translate(0.5 0)"><circle cx="7" cy="8.300" r="5" fill="none" stroke="#c4c4c4" stroke-width="1.15"/><path d="M5 1.500h4M7 1.500v1.900" stroke="#c4c4c4" stroke-width="1.15" fill="none"/><path d="M2.200 3.200l1.100 1.100" stroke="#c4c4c4" stroke-width="1.15" fill="none"/></g></svg>
<span class="t" style="left:53px;top:498.0px;color:#c6c6c6;transform:scaleX(1.013);">Blend</span>
<span class="t" style="left:178px;top:496.9px;color:#2d8ceb;transform:scaleX(0.945);">100,0</span>
<div style="left:2px;top:514.4px;width:301px;height:16.3px;background:#262626;"></div>
<svg style="left:23px;top:518px;" width="7" height="10" viewBox="0 0 7 10"><g transform="translate(0.625 0.25)"><path d="M1 1l3.75 3.75l-3.75 3.75" fill="none" stroke="#b4b4b4" stroke-width="1.2"/></g></svg>
<svg style="left:35px;top:515px;" width="15" height="16" viewBox="0 0 15 16"><g transform="translate(0.5 0)"><circle cx="7" cy="8.300" r="5" fill="none" stroke="#c4c4c4" stroke-width="1.15"/><path d="M5 1.500h4M7 1.500v1.900" stroke="#c4c4c4" stroke-width="1.15" fill="none"/><path d="M2.200 3.200l1.100 1.100" stroke="#c4c4c4" stroke-width="1.15" fill="none"/></g></svg>
<span class="t" style="left:53px;top:515.0px;color:#c6c6c6;transform:scaleX(1.049);">Jitter</span>
<span class="t" style="left:178px;top:513.9px;color:#2d8ceb;transform:scaleX(0.916);">0,0</span>
<span class="t" style="left:194.5px;top:515.5px;color:#b4b4b4;transform:scaleX(0.92);">%</span>
<div style="left:2px;top:531.4px;width:301px;height:16.3px;background:#262626;"></div>
<svg style="left:23px;top:535px;" width="7" height="10" viewBox="0 0 7 10"><g transform="translate(0.625 0.25)"><path d="M1 1l3.75 3.75l-3.75 3.75" fill="none" stroke="#b4b4b4" stroke-width="1.2"/></g></svg>
<svg style="left:35px;top:532px;" width="15" height="16" viewBox="0 0 15 16"><g transform="translate(0.5 0)"><circle cx="7" cy="8.300" r="5" fill="none" stroke="#c4c4c4" stroke-width="1.15"/><path d="M5 1.500h4M7 1.500v1.900" stroke="#c4c4c4" stroke-width="1.15" fill="none"/><path d="M2.200 3.200l1.100 1.100" stroke="#c4c4c4" stroke-width="1.15" fill="none"/></g></svg>
<span class="t" style="left:53px;top:532.0px;color:#c6c6c6;transform:scaleX(1.006);">Opacity</span>
<span class="t" style="left:178px;top:530.9px;color:#2d8ceb;transform:scaleX(0.945);">100,0</span>
<span class="t" style="left:206.5px;top:532.5px;color:#b4b4b4;transform:scaleX(0.92);">%</span>
<div style="left:2px;top:548.4px;width:301px;height:16.3px;background:#262626;"></div>
<div style="left:26.3px;top:556.8px;width:1.5px;height:1.5px;background:#3a3a3a;"></div>
<svg style="left:35px;top:549px;" width="15" height="16" viewBox="0 0 15 16"><g transform="translate(0.5 0)"><circle cx="7" cy="8.300" r="5" fill="none" stroke="#c4c4c4" stroke-width="1.15"/><path d="M5 1.500h4M7 1.500v1.900" stroke="#c4c4c4" stroke-width="1.15" fill="none"/><path d="M2.200 3.200l1.100 1.100" stroke="#c4c4c4" stroke-width="1.15" fill="none"/></g></svg>
<span class="t" style="left:53px;top:549.0px;color:#c6c6c6;transform:scaleX(1.008);">Blending Mode</span>
<div style="left:177.5px;top:549.2px;width:120px;height:15.3px;background:#1c1c1c;border:1px solid #393939;border-radius:1px;"></div>
<span class="t" style="left:185.0px;top:549.0px;color:#d2d2d2;">None</span>
<svg style="left:283px;top:554px;" width="10" height="6" viewBox="0 0 10 6"><g transform="translate(0.5 0.35)"><path d="M1 1l3.5 3.5l3.5 -3.5" fill="none" stroke="#c0c0c0" stroke-width="1.05"/></g></svg>
<div style="left:162px;top:408px;width:84px;height:27.5px;border:3px solid #c3e62c;"></div>
<div style="left:303px;top:707px;width:1px;height:17px;background:#1c1c1c;"></div>
<div style="left:325px;top:70px;width:1278.5px;height:655px;background:#232323;"></div>
<div style="left:1603.5px;top:70px;width:3.5px;height:960px;background:#171717;"></div>
<div style="left:0px;top:725px;width:1604px;height:4px;background:#171717;"></div>
<svg style="left:335px;top:81px;" width="7" height="7" viewBox="0 0 7 7"><g transform="translate(0.5 0.5)"><path d="M.4 .4l5.200 5.200M5.600 .4L.4 5.600" stroke="#c4c4c4" stroke-width="1"/></g></svg>
<div style="left:351px;top:78px;width:10px;height:10px;background:#b8a07e;"></div>
<svg style="left:372px;top:77px;" width="9" height="11" viewBox="0 0 9 11"><path d="M2 5V3.200a2.500 2.500 0 0 1 5 0" fill="none" stroke="#4a4a4a" stroke-width="1.300"/><path d="M.5 5h8v5.500h-8z" fill="#4a4a4a"/><path d="M3.800 6.500h1.400v2.300H3.800z" fill="#232323"/></svg>
<span class="t" style="left:390px;top:76.0px;color:#4f4f4f;transform:scaleX(1.014);">Composition</span>
<span class="t" style="left:456px;top:76.0px;color:#2d8ceb;transform:scaleX(0.961);">Comp 1</span>
<svg style="left:504px;top:79px;" width="9" height="10" viewBox="0 0 9 10"><g transform="translate(0 0.8)"><path d="M0 1h8.5M0 4.5h8.5M0 8h8.5" stroke="#5a5a5a" stroke-width="1.1"/></g></svg>
<div style="left:344px;top:100px;width:71.5px;height:17.5px;background:#2a2a2a;border:1px solid #1e1e1e;border-radius:2px;"></div>
<span class="t" style="left:354px;top:101.0px;color:#2d8ceb;transform:scaleX(0.961);">Comp 1</span>
<div style="left:325px;top:121px;width:1278px;height:1px;background:#1f1f1f;"></div>
<div style="left:325px;top:122px;width:1278px;height:1px;background:#0c0c0c;"></div>
<div style="left:325px;top:123px;width:1278px;height:1px;background:#1e1e1e;"></div>
<svg style="left:573px;top:188px;" width="15" height="15" viewBox="0 0 15 15"><g transform="translate(0.3 0.3)"><circle cx="7" cy="7" r="5.300" fill="#a4a4aa"/><circle cx="7" cy="7" r="5.900" fill="none" stroke="#d4d6de" stroke-width=".9"/><circle cx="7" cy="7" r="4.800" fill="none" stroke="#647af0" stroke-width="1.100"/><path d="M7 .6v12.800M.6 7h12.800" stroke="#647af0" stroke-width="1.050"/></g></svg>
<svg style="left:1341px;top:188px;" width="15" height="15" viewBox="0 0 15 15"><g transform="translate(0.3 0.3)"><circle cx="7" cy="7" r="5.300" fill="#a4a4aa"/><circle cx="7" cy="7" r="5.900" fill="none" stroke="#d4d6de" stroke-width=".9"/><circle cx="7" cy="7" r="4.800" fill="none" stroke="#647af0" stroke-width="1.100"/><path d="M7 .6v12.800M.6 7h12.800" stroke="#647af0" stroke-width="1.050"/></g></svg>
<svg style="left:1341px;top:619px;" width="15" height="15" viewBox="0 0 15 15"><g transform="translate(0.1 0.8)"><circle cx="7" cy="7" r="5.300" fill="#a4a4aa"/><circle cx="7" cy="7" r="5.900" fill="none" stroke="#d4d6de" stroke-width=".9"/><circle cx="7" cy="7" r="4.800" fill="none" stroke="#647af0" stroke-width="1.100"/><path d="M7 .6v12.800M.6 7h12.800" stroke="#647af0" stroke-width="1.050"/></g></svg>
<div style="left:707px;top:278px;width:8px;height:8px;background:#6b7de0;box-shadow:.6px .6px 0 #15151f;"></div>
<div style="left:960.5px;top:278px;width:8px;height:8px;background:#6b7de0;box-shadow:.6px .6px 0 #15151f;"></div>
<div style="left:1214px;top:278px;width:8px;height:8px;background:#6b7de0;box-shadow:.6px .6px 0 #15151f;"></div>
<div style="left:1214px;top:407.5px;width:8px;height:8px;background:#6b7de0;box-shadow:.6px .6px 0 #15151f;"></div>
<div style="left:1214px;top:537px;width:8px;height:8px;background:#6b7de0;box-shadow:.6px .6px 0 #15151f;"></div>
<div style="left:326px;top:701px;width:1278px;height:1px;background:#1b1b1b;"></div>
<div style="left:330px;top:704px;width:69.5px;height:19px;background:#202020;border-radius:2px;"></div>
<span class="t" style="left:337px;top:705.0px;color:#454545;transform:scaleX(1.022);">(50%)</span>
<svg style="left:385px;top:710px;" width="10" height="6" viewBox="0 0 10 6"><g transform="translate(0.5 0.25)"><path d="M1 1l3.5 3.5l3.5 -3.5" fill="none" stroke="#454545" stroke-width="1.2"/></g></svg>
<div style="left:404.5px;top:706px;width:1.5px;height:15px;background:#303030;"></div>
<div style="left:410px;top:704px;width:87px;height:19px;background:#202020;border-radius:2px;"></div>
<span class="t" style="left:418px;top:705.0px;color:#454545;transform:scaleX(1.06);">(Half)</span>
<svg style="left:483px;top:710px;" width="9" height="6" viewBox="0 0 9 6"><g transform="translate(0.0 0.25)"><path d="M1 1l3.5 3.5l3.5 -3.5" fill="none" stroke="#454545" stroke-width="1.2"/></g></svg>
<div style="left:501.5px;top:706px;width:1.5px;height:15px;background:#303030;"></div>
<div style="left:622px;top:706px;width:1.5px;height:15px;background:#303030;"></div>
<div style="left:710px;top:706px;width:1.5px;height:15px;background:#303030;"></div>
<div style="left:764px;top:706px;width:1.5px;height:15px;background:#303030;"></div>
<div style="left:844px;top:706px;width:1.5px;height:15px;background:#303030;"></div>
<div style="left:507px;top:703.5px;width:22px;height:20px;background:#2b2b2b;border-radius:2px;"></div>
<svg style="left:511px;top:706px;" width="14" height="14" viewBox="0 0 14 14"><g transform="translate(0 0.5)"><rect x=".6" y=".6" width="12.800" height="9.800" fill="none" stroke="#6a6a6a" stroke-width="1.200"/><path d="M7.800 2L4.500 6.300h2.300L5.800 9.500l3.500-4.300H7z" fill="#6a6a6a"/><path d="M14 13v-3l-3 3z" fill="#6a6a6a"/></g></svg>
<svg style="left:533px;top:707px;" width="14" height="12" viewBox="0 0 14 12"><rect x=".5" y=".5" width="13" height="11" fill="none" stroke="#404040" stroke-width="1"/><path d="M1 1h3v2.500H1zM7 1h3v2.500H7zM4 3.500h3V6H4zM10 3.500h3V6h-3zM1 6h3v2.500H1zM7 6h3v2.500H7zM4 8.500h3V11H4zM10 8.500h3V11h-3z" fill="#404040"/></svg>
<svg style="left:555px;top:706px;" width="15" height="13" viewBox="0 0 15 13"><path d="M2.500 3.500l10-1.500v8l-10 1.500z" fill="none" stroke="#404040" stroke-width="1.200"/><path d="M2.500 1v12M12.500 0v12" stroke="#404040" stroke-width="1"/></svg>
<svg style="left:577px;top:707px;" width="14" height="12" viewBox="0 0 14 12"><rect x=".6" y=".6" width="12.800" height="10.800" fill="none" stroke="#404040" stroke-width="1.200"/><rect x="3.500" y="3.500" width="7" height="5" fill="#404040"/></svg>
<svg style="left:599px;top:706px;" width="15" height="15" viewBox="0 0 15 15"><rect x=".6" y="1.600" width="12.800" height="8.800" fill="none" stroke="#404040" stroke-width="1.200"/><path d="M7 0v12M0 6h14" stroke="#404040" stroke-width=".9"/><path d="M15 15v-3l-3 3z" fill="#404040"/></svg>
<svg style="left:631px;top:706px;" width="14" height="15" viewBox="0 0 14 15"><circle cx="6.500" cy="3.800" r="3.300" fill="#7a1c20"/><circle cx="4" cy="7.800" r="3.300" fill="#226a26"/><circle cx="9" cy="7.800" r="3.300" fill="#2c4496"/><path d="M14 15v-3l-3 3z" fill="#404040"/></svg>
<svg style="left:654px;top:707px;" width="12" height="13" viewBox="0 0 12 13"><g transform="translate(0 0.5)"><circle cx="6" cy="6" r="5.200" fill="none" stroke="#404040" stroke-width="1.600"/><path d="M6 1l2 4M11 6l-4 2M6 11l-2-4M1 6l4-2" stroke="#404040" stroke-width="1.200"/></g></svg>
<span class="t" style="left:673px;top:705.0px;color:#454545;transform:scaleX(1.013);">+0,0</span>
<svg style="left:719px;top:707px;" width="14" height="12" viewBox="0 0 14 12"><g transform="translate(0 0.5)"><path d="M0 2h3.500L4.500.3h5L10.500 2H14v9H0z" fill="#404040"/><circle cx="7" cy="6.300" r="2.600" fill="#232323"/></g></svg>
<svg style="left:741px;top:706px;" width="15" height="14" viewBox="0 0 15 14"><path d="M0 7.500C2 4.300 4.500 3.300 6.500 3.300S11 4.300 13 7.500C11 10.700 8.500 11.700 6.500 11.700S2 10.700 0 7.500z" fill="#404040"/><circle cx="6.500" cy="7.500" r="2.200" fill="#232323"/><circle cx="11.500" cy="2.800" r="2.600" fill="#404040"/></svg>
<div style="left:769px;top:704px;width:70px;height:19px;background:#262626;border-radius:2px;"></div>
<span class="t" style="left:778px;top:705.0px;color:#454545;transform:scaleX(0.981);">0:00:00:10</span>
<div style="left:1607px;top:70px;width:313px;height:56px;background:#232323;"></div>
<div style="left:1607px;top:126px;width:313px;height:4px;background:#171717;"></div>
<div style="left:1607px;top:130px;width:313px;height:900px;background:#232323;"></div>
<span class="t" style="left:1620px;top:76.0px;color:#4c4c4c;transform:scaleX(1.022);">Preview</span>
<svg style="left:1672px;top:79px;" width="9" height="10" viewBox="0 0 9 10"><g transform="translate(0 0.8)"><path d="M0 1h8.5M0 4.5h8.5M0 8h8.5" stroke="#5a5a5a" stroke-width="1.1"/></g></svg>
<svg style="left:1653px;top:106px;" width="111" height="12" viewBox="0 0 111 12"><g transform="translate(0.5 0.8)"><path d="M.5 0h1.600v10H.5zM12.500 0v10L3.500 5z" fill="#3c3c3c"/><path d="M33 0v10l-9-5zM34.500 0h2v10h-2z" fill="#3c3c3c"/><path d="M50 0l9 5-9 5z" fill="#3c3c3c"/><path d="M72.500 0h2v10h-2zM76 0l9 5-9 5z" fill="#3c3c3c"/><path d="M97 0l9 5-9 5zM106.500 0h1.600v10h-1.600z" fill="#3c3c3c"/></g></svg>
<span class="t" style="left:1620px;top:136.0px;color:#4c4c4c;transform:scaleX(0.983);">Properties: Edge</span>
<svg style="left:1887px;top:139px;" width="9" height="10" viewBox="0 0 9 10"><g transform="translate(0.5 0.8)"><path d="M0 1h8.5M0 4.5h8.5M0 8h8.5" stroke="#5a5a5a" stroke-width="1.1"/></g></svg>
<span class="t" style="left:1619.5px;top:160.0px;color:#505050;transform:scaleX(1.049);-webkit-text-stroke:.45px #505050;">Layer Transform</span>
<span class="t" style="left:1760px;top:160.0px;color:#4c4c4c;transform:scaleX(0.957);">Reset</span>
<svg style="left:1629px;top:180px;" width="15" height="16" viewBox="0 0 15 16"><g transform="translate(0.5 0)"><circle cx="7" cy="8.300" r="5" fill="none" stroke="#484848" stroke-width="1.2"/><path d="M5 1.500h4M7 1.500v1.900" stroke="#484848" stroke-width="1.2" fill="none"/><path d="M2.200 3.200l1.100 1.100" stroke="#484848" stroke-width="1.2" fill="none"/></g></svg>
<span class="t" style="left:1667px;top:180.0px;color:#4c4c4c;">Anchor Point</span>
<span class="t" style="left:1759.2px;top:179.0px;color:#4c4c4c;transform:scaleX(0.987);">115</span>
<div style="left:1757px;top:196px;width:39px;height:1px;background:#454545;"></div>
<span class="t" style="left:1809px;top:179.0px;color:#4c4c4c;transform:scaleX(0.94);">33</span>
<div style="left:1807.5px;top:196px;width:39px;height:1px;background:#454545;"></div>
<svg style="left:1629px;top:200px;" width="15" height="16" viewBox="0 0 15 16"><g transform="translate(0.5 0)"><circle cx="7" cy="8.300" r="5" fill="none" stroke="#484848" stroke-width="1.2"/><path d="M5 1.500h4M7 1.500v1.900" stroke="#484848" stroke-width="1.2" fill="none"/><path d="M2.200 3.200l1.100 1.100" stroke="#484848" stroke-width="1.2" fill="none"/></g></svg>
<span class="t" style="left:1667px;top:200.0px;color:#4c4c4c;transform:scaleX(1.022);">Position</span>
<span class="t" style="left:1759.2px;top:199.0px;color:#4c4c4c;transform:scaleX(0.97);">960</span>
<div style="left:1757px;top:216px;width:39px;height:1px;background:#454545;"></div>
<span class="t" style="left:1809px;top:199.0px;color:#4c4c4c;transform:scaleX(0.981);">540</span>
<div style="left:1807.5px;top:216px;width:39px;height:1px;background:#454545;"></div>
<svg style="left:1629px;top:220px;" width="15" height="16" viewBox="0 0 15 16"><g transform="translate(0.5 0)"><circle cx="7" cy="8.300" r="5" fill="none" stroke="#484848" stroke-width="1.2"/><path d="M5 1.500h4M7 1.500v1.900" stroke="#484848" stroke-width="1.2" fill="none"/><path d="M2.200 3.200l1.100 1.100" stroke="#484848" stroke-width="1.2" fill="none"/></g></svg>
<span class="t" style="left:1667px;top:220.0px;color:#4c4c4c;transform:scaleX(0.927);">Scale</span>
<svg style="left:1734px;top:223px;" width="15" height="9" viewBox="0 0 15 9"><g transform="translate(0.5 0.5)"><path d="M6 6.500H4a2.700 2.700 0 0 1 0-5.400h3.200a2.700 2.700 0 0 1 2.500 3.700" fill="none" stroke="#28507a" stroke-width="1.400"/><path d="M8 1.100h2a2.700 2.700 0 0 1 0 5.400H6.800A2.700 2.700 0 0 1 4.300 2.800" fill="none" stroke="#28507a" stroke-width="1.400"/></g></svg>
<span class="t" style="left:1759.2px;top:219.0px;color:#4c4c4c;transform:scaleX(0.97);">100</span>
<div style="left:1757px;top:236px;width:39px;height:1px;background:#454545;"></div>
<span class="t" style="left:1779.5px;top:219.5px;color:#4c4c4c;font-size:10px;transform:scaleX(0.956);">%</span>
<span class="t" style="left:1809px;top:219.0px;color:#4c4c4c;transform:scaleX(0.981);">100</span>
<div style="left:1807.5px;top:236px;width:39px;height:1px;background:#454545;"></div>
<span class="t" style="left:1829.5px;top:219.5px;color:#4c4c4c;font-size:10px;transform:scaleX(0.956);">%</span>
<svg style="left:1629px;top:240px;" width="15" height="16" viewBox="0 0 15 16"><g transform="translate(0.5 0)"><circle cx="7" cy="8.300" r="5" fill="none" stroke="#484848" stroke-width="1.2"/><path d="M5 1.500h4M7 1.500v1.900" stroke="#484848" stroke-width="1.2" fill="none"/><path d="M2.200 3.200l1.100 1.100" stroke="#484848" stroke-width="1.2" fill="none"/></g></svg>
<span class="t" style="left:1667px;top:240.0px;color:#4c4c4c;transform:scaleX(1.025);">Rotation</span>
<span class="t" style="left:1759px;top:239.0px;color:#4c4c4c;transform:scaleX(0.981);">0</span>
<span class="t" style="left:1767px;top:239.5px;color:#4c4c4c;">x</span>
<span class="t" style="left:1773px;top:239.0px;color:#4c4c4c;transform:scaleX(0.997);">+0</span>
<span class="t" style="left:1787.5px;top:237.0px;color:#4c4c4c;font-size:9px;">°</span>
<div style="left:1757px;top:256px;width:38px;height:1px;background:#454545;"></div>
<svg style="left:1629px;top:260px;" width="15" height="16" viewBox="0 0 15 16"><g transform="translate(0.5 0)"><circle cx="7" cy="8.300" r="5" fill="none" stroke="#484848" stroke-width="1.2"/><path d="M5 1.500h4M7 1.500v1.900" stroke="#484848" stroke-width="1.2" fill="none"/><path d="M2.200 3.200l1.100 1.100" stroke="#484848" stroke-width="1.2" fill="none"/></g></svg>
<span class="t" style="left:1667px;top:260.0px;color:#4c4c4c;transform:scaleX(1.006);">Opacity</span>
<span class="t" style="left:1759.2px;top:259.0px;color:#4c4c4c;transform:scaleX(0.97);">100</span>
<div style="left:1757px;top:276px;width:39px;height:1px;background:#454545;"></div>
<span class="t" style="left:1779.5px;top:259.5px;color:#4c4c4c;font-size:10px;transform:scaleX(0.956);">%</span>
<div style="left:1618px;top:283.5px;width:276px;height:2px;background:#171717;"></div>
<span class="t" style="left:1619.5px;top:292.0px;color:#505050;transform:scaleX(1.032);-webkit-text-stroke:.45px #505050;">Layer Contents</span>
<div style="left:1618px;top:316px;width:278px;height:150px;background:#1d1d1d;border-radius:2px;"></div>
<svg style="left:1624px;top:322px;" width="12" height="9" viewBox="0 0 12 9"><g transform="translate(0 0.5)"><path d="M.5 4C2.200 1.500 4 .6 6 .6S9.800 1.500 11.500 4C9.800 6.500 8 7.400 6 7.400S2.200 6.500.5 4z" fill="none" stroke="#4a4a4a" stroke-width="1.100"/><circle cx="6" cy="4" r="1.900" fill="#4a4a4a"/></g></svg>
<svg style="left:1624px;top:342px;" width="12" height="9" viewBox="0 0 12 9"><g transform="translate(0 0.5)"><path d="M.5 4C2.200 1.500 4 .6 6 .6S9.800 1.500 11.500 4C9.800 6.500 8 7.400 6 7.400S2.200 6.500.5 4z" fill="none" stroke="#4a4a4a" stroke-width="1.100"/><circle cx="6" cy="4" r="1.900" fill="#4a4a4a"/></g></svg>
<div style="left:1642px;top:317px;width:253px;height:19px;background:#a0a0a0;"></div>
<svg style="left:1647px;top:321px;" width="13" height="12" viewBox="0 0 13 12"><g transform="translate(0.5 0)"><polygon points="6.00,0.00 7.48,3.96 11.71,4.15 8.40,6.78 9.53,10.85 6.00,8.52 2.47,10.85 3.60,6.78 0.29,4.15 4.52,3.96" fill="#8a8a8a"/></g></svg>
<span class="t" style="left:1667px;top:319.0px;color:#262626;transform:scaleX(0.973);">Edge</span>
<div style="left:1642px;top:337.5px;width:253px;height:18.5px;background:#474747;"></div>
<svg style="left:1671px;top:341px;" width="13" height="12" viewBox="0 0 13 12"><g transform="translate(0.5 0)"><polygon points="6.00,0.00 7.48,3.96 11.71,4.15 8.40,6.78 9.53,10.85 6.00,8.52 2.47,10.85 3.60,6.78 0.29,4.15 4.52,3.96" fill="#a0a0a0"/></g></svg>
<span class="t" style="left:1691px;top:339.0px;color:#525252;transform:scaleX(0.988);">Rectangle 1</span>
<div style="left:1618px;top:477.5px;width:276px;height:2px;background:#171717;"></div>
<span class="t" style="left:1619.5px;top:486.0px;color:#505050;transform:scaleX(1.024);-webkit-text-stroke:.45px #505050;">Shape Properties</span>
<span class="t" style="left:1760px;top:486.0px;color:#4c4c4c;transform:scaleX(0.957);">Reset</span>
<svg style="left:1629px;top:512px;" width="15" height="16" viewBox="0 0 15 16"><g transform="translate(0.5 0)"><circle cx="7" cy="8.300" r="5" fill="none" stroke="#484848" stroke-width="1.2"/><path d="M5 1.500h4M7 1.500v1.900" stroke="#484848" stroke-width="1.2" fill="none"/><path d="M2.200 3.200l1.100 1.100" stroke="#484848" stroke-width="1.2" fill="none"/></g></svg>
<span class="t" style="left:1667px;top:512.0px;color:#4c4c4c;transform:scaleX(0.911);">Size</span>
<svg style="left:1734px;top:515px;" width="15" height="9" viewBox="0 0 15 9"><g transform="translate(0.5 0.5)"><path d="M6 6.500H4a2.700 2.700 0 0 1 0-5.400h3.200a2.700 2.700 0 0 1 2.500 3.700" fill="none" stroke="#28507a" stroke-width="1.400"/><path d="M8 1.100h2a2.700 2.700 0 0 1 0 5.400H6.800A2.700 2.700 0 0 1 4.300 2.800" fill="none" stroke="#28507a" stroke-width="1.400"/></g></svg>
<span class="t" style="left:1759.2px;top:511.0px;color:#4c4c4c;transform:scaleX(0.973);">1014</span>
<div style="left:1757px;top:528px;width:39px;height:1px;background:#454545;"></div>
<span class="t" style="left:1809px;top:511.0px;color:#4c4c4c;transform:scaleX(0.981);">518</span>
<div style="left:1807.5px;top:528px;width:39px;height:1px;background:#454545;"></div>
<svg style="left:1629px;top:532px;" width="15" height="16" viewBox="0 0 15 16"><g transform="translate(0.5 0)"><circle cx="7" cy="8.300" r="5" fill="none" stroke="#484848" stroke-width="1.2"/><path d="M5 1.500h4M7 1.500v1.900" stroke="#484848" stroke-width="1.2" fill="none"/><path d="M2.200 3.200l1.100 1.100" stroke="#484848" stroke-width="1.2" fill="none"/></g></svg>
<span class="t" style="left:1667px;top:532.0px;color:#4c4c4c;transform:scaleX(0.943);">Roundness</span>
<span class="t" style="left:1759.2px;top:531.0px;color:#4c4c4c;transform:scaleX(0.964);">46</span>
<div style="left:1757px;top:548px;width:39px;height:1px;background:#454545;"></div>
<svg style="left:1629px;top:552px;" width="15" height="16" viewBox="0 0 15 16"><g transform="translate(0.5 0)"><circle cx="7" cy="8.300" r="5" fill="none" stroke="#484848" stroke-width="1.2"/><path d="M5 1.500h4M7 1.500v1.900" stroke="#484848" stroke-width="1.2" fill="none"/><path d="M2.200 3.200l1.100 1.100" stroke="#484848" stroke-width="1.2" fill="none"/></g></svg>
<span class="t" style="left:1667px;top:552.0px;color:#4c4c4c;transform:scaleX(0.998);">Stroke Color</span>
<div style="left:1757px;top:552px;width:16px;height:16px;background:#8e8e8e;border:1px solid #e4e4e4;"></div>
<svg style="left:1779px;top:551px;" width="16" height="17" viewBox="0 0 16 17"><g transform="translate(0 0.5)"><path d="M11 1.500a2.300 2.300 0 0 1 3.300 3.300l-2 2 .8.800-1.300 1.300-4.700-4.700 1.300-1.300.8.800z" fill="#4a4a4a"/><path d="M8 6.300L2.300 12l-.8 2.600 2.600-.8 5.700-5.700" fill="none" stroke="#4a4a4a" stroke-width="1.100"/></g></svg>
<div style="left:1801px;top:550.3px;width:91px;height:18.5px;background:#2a2a2a;border-radius:2px;"></div>
<span class="t" style="left:1809px;top:552.0px;color:#484848;transform:scaleX(0.985);">Solid Color</span>
<svg style="left:1877px;top:557px;" width="10" height="6" viewBox="0 0 10 6"><g transform="translate(0.5 0.25)"><path d="M1 1l3.5 3.5l3.5 -3.5" fill="none" stroke="#484848" stroke-width="1.2"/></g></svg>
<svg style="left:1629px;top:572px;" width="15" height="16" viewBox="0 0 15 16"><g transform="translate(0.5 0)"><circle cx="7" cy="8.300" r="5" fill="none" stroke="#484848" stroke-width="1.2"/><path d="M5 1.500h4M7 1.500v1.900" stroke="#484848" stroke-width="1.2" fill="none"/><path d="M2.200 3.200l1.100 1.100" stroke="#484848" stroke-width="1.2" fill="none"/></g></svg>
<span class="t" style="left:1667px;top:572.0px;color:#4c4c4c;transform:scaleX(1.016);">Stroke Width</span>
<span class="t" style="left:1759.2px;top:571.0px;color:#4c4c4c;transform:scaleX(0.948);">0</span>
<div style="left:1757px;top:588px;width:39px;height:1px;background:#454545;"></div>
<span class="t" style="left:1667px;top:592.0px;color:#4c4c4c;transform:scaleX(0.977);">Line Cap</span>
<span class="t" style="left:1667px;top:613.0px;color:#4c4c4c;transform:scaleX(0.977);">Line Join</span>
<div style="left:1757px;top:590.3px;width:86px;height:19px;background:#1e1e1e;border:1px solid #343434;border-radius:2px;"></div>
<div style="left:1758px;top:591.3px;width:27.5px;height:17px;background:#292929;"></div>
<div style="left:1785.5px;top:590.3px;width:1px;height:19px;background:#343434;"></div>
<div style="left:1814px;top:590.3px;width:1px;height:19px;background:#343434;"></div>
<div style="left:1757px;top:611.4px;width:86px;height:19px;background:#1e1e1e;border:1px solid #343434;border-radius:2px;"></div>
<div style="left:1758px;top:612.4px;width:27.5px;height:17px;background:#292929;"></div>
<div style="left:1785.5px;top:611.4px;width:1px;height:19px;background:#343434;"></div>
<div style="left:1814px;top:611.4px;width:1px;height:19px;background:#343434;"></div>
<svg style="left:1766px;top:595px;" width="11" height="11" viewBox="0 0 11 11"><g transform="translate(0.5 0)"><path d="M2.500 0h7v3.300H6v3.400h3.500V10h-7V7.200H0V2.800h2.500z" fill="#25466e"/><path d="M1.200 4.200h3v1.600h-3z" fill="#292929"/></g></svg>
<svg style="left:1794px;top:595px;" width="12" height="11" viewBox="0 0 12 11"><g transform="translate(0.5 0)"><path d="M11 0v3.500H6.500a1.700 1.700 0 0 0 0 3.400H11v3.500H5.500a5.200 5.200 0 0 1 0-10.400z" fill="#484848"/></g></svg>
<svg style="left:1824px;top:595px;" width="10" height="11" viewBox="0 0 10 11"><path d="M10 0v3.500H4.500v3.400H10v3.500H0V0z" fill="#484848"/></svg>
<svg style="left:1766px;top:615px;" width="11" height="12" viewBox="0 0 11 12"><g transform="translate(0 0.8)"><path d="M0 0h4.500v6H10.500v4.500H0z" fill="#25466e"/></g></svg>
<svg style="left:1795px;top:615px;" width="11" height="12" viewBox="0 0 11 12"><g transform="translate(0 0.8)"><path d="M0 0h4.500v4.500a1.500 1.500 0 0 0 1.500 1.500h4.500v4.500H4.500a4.500 4.500 0 0 1-4.500-4.500z" fill="#484848"/></g></svg>
<svg style="left:1824px;top:615px;" width="11" height="12" viewBox="0 0 11 12"><g transform="translate(0 0.8)"><path d="M0 0h4.500v4L6.500 6h4v4.500H4.500L0 6z" fill="#484848"/></g></svg>
<svg style="left:1629px;top:634px;" width="15" height="16" viewBox="0 0 15 16"><g transform="translate(0.5 0)"><circle cx="7" cy="8.300" r="5" fill="none" stroke="#484848" stroke-width="1.2"/><path d="M5 1.500h4M7 1.500v1.900" stroke="#484848" stroke-width="1.2" fill="none"/><path d="M2.200 3.200l1.100 1.100" stroke="#484848" stroke-width="1.2" fill="none"/></g></svg>
<span class="t" style="left:1667px;top:634.0px;color:#4c4c4c;transform:scaleX(1.026);">Fill Color</span>
<div style="left:1757px;top:634px;width:16px;height:16px;background:#1f2732;border:1px solid #e4e4e4;"></div>
<svg style="left:1779px;top:633px;" width="16" height="17" viewBox="0 0 16 17"><g transform="translate(0 0.5)"><path d="M11 1.500a2.300 2.300 0 0 1 3.300 3.300l-2 2 .8.800-1.300 1.300-4.700-4.700 1.300-1.300.8.800z" fill="#4a4a4a"/><path d="M8 6.300L2.300 12l-.8 2.600 2.600-.8 5.700-5.700" fill="none" stroke="#4a4a4a" stroke-width="1.100"/></g></svg>
<div style="left:1801px;top:632.3px;width:91px;height:18.5px;background:#2a2a2a;border-radius:2px;"></div>
<span class="t" style="left:1809px;top:634.0px;color:#484848;transform:scaleX(0.985);">Solid Color</span>
<svg style="left:1877px;top:639px;" width="10" height="6" viewBox="0 0 10 6"><g transform="translate(0.5 0.25)"><path d="M1 1l3.5 3.5l3.5 -3.5" fill="none" stroke="#484848" stroke-width="1.2"/></g></svg>
<div style="left:1618px;top:657.5px;width:276px;height:2px;background:#171717;"></div>
<span class="t" style="left:1619.5px;top:666.0px;color:#505050;transform:scaleX(1.043);-webkit-text-stroke:.45px #505050;">Shape Transform</span>
<span class="t" style="left:1760px;top:666.0px;color:#4c4c4c;transform:scaleX(0.957);">Reset</span>
<svg style="left:1629px;top:692px;" width="15" height="16" viewBox="0 0 15 16"><g transform="translate(0.5 0)"><circle cx="7" cy="8.300" r="5" fill="none" stroke="#484848" stroke-width="1.2"/><path d="M5 1.500h4M7 1.500v1.900" stroke="#484848" stroke-width="1.2" fill="none"/><path d="M2.200 3.200l1.100 1.100" stroke="#484848" stroke-width="1.2" fill="none"/></g></svg>
<span class="t" style="left:1667px;top:692.0px;color:#4c4c4c;">Anchor Point</span>
<span class="t" style="left:1759.2px;top:691.0px;color:#4c4c4c;transform:scaleX(0.948);">0</span>
<div style="left:1757px;top:708px;width:39px;height:1px;background:#454545;"></div>
<span class="t" style="left:1809px;top:691.0px;color:#4c4c4c;transform:scaleX(0.981);">0</span>
<div style="left:1807.5px;top:708px;width:39px;height:1px;background:#454545;"></div>
<svg style="left:1629px;top:712px;" width="15" height="16" viewBox="0 0 15 16"><g transform="translate(0.5 0)"><circle cx="7" cy="8.300" r="5" fill="none" stroke="#484848" stroke-width="1.2"/><path d="M5 1.500h4M7 1.500v1.900" stroke="#484848" stroke-width="1.2" fill="none"/><path d="M2.200 3.200l1.100 1.100" stroke="#484848" stroke-width="1.2" fill="none"/></g></svg>
<span class="t" style="left:1667px;top:712.0px;color:#4c4c4c;transform:scaleX(1.022);">Position</span>
<span class="t" style="left:1759.2px;top:711.0px;color:#4c4c4c;transform:scaleX(0.987);">115</span>
<div style="left:1757px;top:728px;width:39px;height:1px;background:#454545;"></div>
<span class="t" style="left:1809px;top:711.0px;color:#4c4c4c;transform:scaleX(0.94);">33</span>
<div style="left:1807.5px;top:728px;width:39px;height:1px;background:#454545;"></div>
<svg style="left:1629px;top:732px;" width="15" height="16" viewBox="0 0 15 16"><g transform="translate(0.5 0)"><circle cx="7" cy="8.300" r="5" fill="none" stroke="#484848" stroke-width="1.2"/><path d="M5 1.500h4M7 1.500v1.900" stroke="#484848" stroke-width="1.2" fill="none"/><path d="M2.200 3.200l1.100 1.100" stroke="#484848" stroke-width="1.2" fill="none"/></g></svg>
<span class="t" style="left:1667px;top:732.0px;color:#4c4c4c;transform:scaleX(0.927);">Scale</span>
<svg style="left:1734px;top:735px;" width="15" height="9" viewBox="0 0 15 9"><g transform="translate(0.5 0.5)"><path d="M6 6.500H4a2.700 2.700 0 0 1 0-5.400h3.200a2.700 2.700 0 0 1 2.500 3.700" fill="none" stroke="#28507a" stroke-width="1.400"/><path d="M8 1.100h2a2.700 2.700 0 0 1 0 5.400H6.800A2.700 2.700 0 0 1 4.300 2.800" fill="none" stroke="#28507a" stroke-width="1.400"/></g></svg>
<span class="t" style="left:1759.2px;top:731.0px;color:#4c4c4c;transform:scaleX(0.97);">100</span>
<div style="left:1757px;top:748px;width:39px;height:1px;background:#454545;"></div>
<span class="t" style="left:1779.5px;top:731.5px;color:#4c4c4c;font-size:10px;transform:scaleX(0.956);">%</span>
<span class="t" style="left:1809px;top:731.0px;color:#4c4c4c;transform:scaleX(0.981);">100</span>
<div style="left:1807.5px;top:748px;width:39px;height:1px;background:#454545;"></div>
<span class="t" style="left:1829.5px;top:731.5px;color:#4c4c4c;font-size:10px;transform:scaleX(0.956);">%</span>
<svg style="left:1629px;top:752px;" width="15" height="16" viewBox="0 0 15 16"><g transform="translate(0.5 0)"><circle cx="7" cy="8.300" r="5" fill="none" stroke="#484848" stroke-width="1.2"/><path d="M5 1.500h4M7 1.500v1.900" stroke="#484848" stroke-width="1.2" fill="none"/><path d="M2.200 3.200l1.100 1.100" stroke="#484848" stroke-width="1.2" fill="none"/></g></svg>
<span class="t" style="left:1667px;top:752.0px;color:#4c4c4c;transform:scaleX(0.985);">Skew</span>
<span class="t" style="left:1759.2px;top:751.0px;color:#4c4c4c;transform:scaleX(0.948);">0</span>
<div style="left:1757px;top:768px;width:39px;height:1px;background:#454545;"></div>
<svg style="left:1629px;top:772px;" width="15" height="16" viewBox="0 0 15 16"><g transform="translate(0.5 0)"><circle cx="7" cy="8.300" r="5" fill="none" stroke="#484848" stroke-width="1.2"/><path d="M5 1.500h4M7 1.500v1.900" stroke="#484848" stroke-width="1.2" fill="none"/><path d="M2.200 3.200l1.100 1.100" stroke="#484848" stroke-width="1.2" fill="none"/></g></svg>
<span class="t" style="left:1667px;top:772.0px;color:#4c4c4c;transform:scaleX(0.987);">Skew Axis</span>
<span class="t" style="left:1759px;top:771.0px;color:#4c4c4c;transform:scaleX(0.981);">0</span>
<span class="t" style="left:1767px;top:771.5px;color:#4c4c4c;">x</span>
<span class="t" style="left:1773px;top:771.0px;color:#4c4c4c;transform:scaleX(0.997);">+0</span>
<span class="t" style="left:1787.5px;top:769.0px;color:#4c4c4c;font-size:9px;">°</span>
<div style="left:1757px;top:788px;width:38px;height:1px;background:#454545;"></div>
<svg style="left:1629px;top:792px;" width="15" height="16" viewBox="0 0 15 16"><g transform="translate(0.5 0)"><circle cx="7" cy="8.300" r="5" fill="none" stroke="#484848" stroke-width="1.2"/><path d="M5 1.500h4M7 1.500v1.900" stroke="#484848" stroke-width="1.2" fill="none"/><path d="M2.200 3.200l1.100 1.100" stroke="#484848" stroke-width="1.2" fill="none"/></g></svg>
<span class="t" style="left:1667px;top:792.0px;color:#4c4c4c;transform:scaleX(1.025);">Rotation</span>
<span class="t" style="left:1759px;top:791.0px;color:#4c4c4c;transform:scaleX(0.981);">0</span>
<span class="t" style="left:1767px;top:791.5px;color:#4c4c4c;">x</span>
<span class="t" style="left:1773px;top:791.0px;color:#4c4c4c;transform:scaleX(0.997);">+0</span>
<span class="t" style="left:1787.5px;top:789.0px;color:#4c4c4c;font-size:9px;">°</span>
<div style="left:1757px;top:808px;width:38px;height:1px;background:#454545;"></div>
<svg style="left:1629px;top:812px;" width="15" height="16" viewBox="0 0 15 16"><g transform="translate(0.5 0)"><circle cx="7" cy="8.300" r="5" fill="none" stroke="#484848" stroke-width="1.2"/><path d="M5 1.500h4M7 1.500v1.900" stroke="#484848" stroke-width="1.2" fill="none"/><path d="M2.200 3.200l1.100 1.100" stroke="#484848" stroke-width="1.2" fill="none"/></g></svg>
<span class="t" style="left:1667px;top:812.0px;color:#4c4c4c;transform:scaleX(1.006);">Opacity</span>
<span class="t" style="left:1759.2px;top:811.0px;color:#4c4c4c;transform:scaleX(0.97);">100</span>
<div style="left:1757px;top:828px;width:39px;height:1px;background:#454545;"></div>
<span class="t" style="left:1779.5px;top:811.5px;color:#4c4c4c;font-size:10px;transform:scaleX(0.956);">%</span>
<div style="left:1608px;top:845px;width:298px;height:1.5px;background:#171717;"></div>
<div style="left:1608px;top:874px;width:298px;height:1.5px;background:#171717;"></div>
<div style="left:1608px;top:904px;width:298px;height:1.5px;background:#171717;"></div>
<span class="t" style="left:1620px;top:853.0px;color:#4c4c4c;transform:scaleX(1.043);">Align</span>
<span class="t" style="left:1620px;top:883.0px;color:#4c4c4c;transform:scaleX(1.013);">Audio</span>
<span class="t" style="left:1620px;top:913.0px;color:#4c4c4c;transform:scaleX(0.986);">Effects &amp; Presets</span>
<svg style="left:1887px;top:916px;" width="9" height="10" viewBox="0 0 9 10"><g transform="translate(0.5 0.8)"><path d="M0 1h8.5M0 4.5h8.5M0 8h8.5" stroke="#5a5a5a" stroke-width="1.1"/></g></svg>
<div style="left:1612px;top:937px;width:290px;height:20px;background:#2a2a2a;border-radius:3px;"></div>
<svg style="left:1619px;top:940px;" width="18" height="13" viewBox="0 0 18 13"><circle cx="7.300" cy="4.800" r="3.600" fill="none" stroke="#25466e" stroke-width="1.300"/><path d="M4.800 7.500L1 11.500" stroke="#25466e" stroke-width="1.500"/><path d="M11 7.500h5l-2.500 2.800z" fill="#25466e"/></svg>
<span class="t" style="left:1641px;top:939.0px;color:#464646;transform:scaleX(1.011);">4-color</span>
<div style="left:1608px;top:959.7px;width:298px;height:16.6px;background:#1e1e1e;"></div>
<svg style="left:1612px;top:965px;" width="10" height="7" viewBox="0 0 10 7"><g transform="translate(0.5 0.75)"><path d="M1 1l3.5 3.5l3.5 -3.5" fill="none" stroke="#c4c4c4" stroke-width="1.2"/></g></svg>
<span class="t" style="left:1624px;top:960.0px;color:#d0d0d0;transform:scaleX(0.992);">Generate</span>
<div style="left:1608px;top:977px;width:298px;height:16.3px;background:#3c3c3c;"></div>
<svg style="left:1641px;top:980px;" width="14" height="12" viewBox="0 0 14 12"><g transform="translate(0.7 0)"><path d="M0 1.500h1.500V0h3v1.500h3.500V0h3v1.500h1.500v10H0z" fill="#dcdcdc"/></g></svg>
<span class="t" style="left:1643.3px;top:978.8px;color:#222;font-size:8.5px;font-weight:700;transform:scaleX(1.026);">16</span>
<div style="left:1658px;top:978px;width:92px;height:14.2px;background:#a8a8a8;"></div>
<span class="t" style="left:1661px;top:976.7px;color:#1a1a1a;transform:scaleX(1.009);">4-Color Gradient</span>
<div style="left:1608px;top:993.3px;width:298px;height:1.7px;background:#0c0c0c;"></div>
<div style="left:1905px;top:994px;width:1.3px;height:17px;background:#0c0c0c;"></div>
<svg style="left:1886px;top:997px;" width="14" height="12" viewBox="0 0 14 12"><g transform="translate(0.7 0)"><path d="M0 0h12.300v12H6.300V6H0z" fill="#d4d4d4"/><path d="M.3 6.300h5.700v5.700z" fill="#9a9a9a"/></g></svg>
<div style="left:0px;top:729px;width:1604px;height:301px;background:#232323;"></div>
<div style="left:0px;top:729px;width:1px;height:301px;background:#1a1a1a;"></div>
<svg style="left:11px;top:740px;" width="7" height="7" viewBox="0 0 7 7"><g transform="translate(0.5 0.5)"><path d="M.4 .4l5.200 5.200M5.600 .4L.4 5.600" stroke="#c4c4c4" stroke-width="1"/></g></svg>
<div style="left:27px;top:737.5px;width:10px;height:10px;background:#b8a07e;"></div>
<span class="t" style="left:49.5px;top:735.0px;color:#505050;transform:scaleX(0.961);">Comp 1</span>
<svg style="left:98px;top:738px;" width="9" height="10" viewBox="0 0 9 10"><g transform="translate(0 0.8)"><path d="M0 1h8.5M0 4.5h8.5M0 8h8.5" stroke="#5a5a5a" stroke-width="1.1"/></g></svg>
<span class="t" style="left:17px;top:758.5px;color:#2d8ceb;font-size:15px;font-weight:700;transform:scaleX(1.008);line-height:18px;height:18px;">0:00:00:10</span>
<span class="t" style="left:12px;top:775.0px;color:#28598f;transform:scaleX(0.945);">00010 (30.00 fps)</span>
<div style="left:107.5px;top:764.5px;width:259.5px;height:19px;background:#2a2a2a;border-radius:3px;"></div>
<svg style="left:114px;top:768px;" width="18" height="13" viewBox="0 0 18 13"><circle cx="7.300" cy="4.800" r="3.600" fill="none" stroke="#4c4c4c" stroke-width="1.300"/><path d="M4.800 7.500L1 11.500" stroke="#4c4c4c" stroke-width="1.500"/><path d="M11.500 7h4.500l-2.250 2.500z" fill="#4c4c4c"/></svg>
<svg style="left:382px;top:768px;" width="17" height="14" viewBox="0 0 17 14"><rect x="1.300" y="1.400" width="4.700" height="2.300" rx=".8" fill="#c0c0c0"/><rect x="10.500" y="1" width="4.600" height="2.700" rx=".5" fill="#c0c0c0"/><rect x="10.500" y="6.200" width="4.600" height="2.700" rx=".5" fill="#c0c0c0"/><path d="M0 2.500h11M8.400 2.500v5.100h2.500" fill="none" stroke="#c0c0c0" stroke-width="1"/><path d="M12.800 10.700h4l-2 2.400z" fill="#c0c0c0"/></svg>
<svg style="left:416px;top:767px;" width="16" height="14" viewBox="0 0 16 14"><g transform="translate(0 0.8)"><path d="M1 6.500a7 6.500 0 0 1 14 0z" fill="#c0c0c0"/><circle cx="5.600" cy="3.700" r="1.100" fill="#232323"/><circle cx="10.400" cy="3.700" r="1.100" fill="#232323"/><rect x="0" y="7" width="16" height="5.300" fill="#8a8a8a"/><rect x="7.200" y="3.800" width="1.700" height="7.400" fill="#c0c0c0"/></g></svg>
<svg style="left:443px;top:767px;" width="15" height="14" viewBox="0 0 15 14"><g transform="translate(0.2 0)"><path d="M0 3.500h3.800v8.200h5.700V14H0z" fill="#c0c0c0"/><path d="M1.500 4.500v8" stroke="#232323" stroke-width=".9" stroke-dasharray="1 1"/><rect x="4.700" y="0" width="9.400" height="11" fill="#c0c0c0"/><path d="M5.900 .6v10M12.900 .6v10" stroke="#232323" stroke-width="1" stroke-dasharray="1 1"/><path d="M7.600 5.500h3.600" stroke="#232323" stroke-width="1"/></g></svg>
<svg style="left:469px;top:767px;" width="15" height="15" viewBox="0 0 15 15"><circle cx="4.900" cy="9.300" r="4.400" fill="none" stroke="#c0c0c0" stroke-width="1"/><circle cx="6.300" cy="7.900" r="4.400" fill="#232323" stroke="#c0c0c0" stroke-width="1"/><circle cx="7.700" cy="6.500" r="4.400" fill="#232323" stroke="#c0c0c0" stroke-width="1"/><circle cx="9.300" cy="4.900" r="4.400" fill="#6a6a6a" stroke="#c0c0c0" stroke-width="1"/></svg>
<svg style="left:502px;top:765px;" width="17" height="17" viewBox="0 0 17 17"><g transform="translate(0 0.7)"><rect x="1.200" y="3.200" width="14.500" height="11.600" fill="none" stroke="#c0c0c0" stroke-width="1.200"/><path d="M4 .4v2.800M7.500 .4v2.800M11 .4v2.800M14.300 .4v2.800M0 6h1.200M0 9.300h1.200M0 12.500h1.200" stroke="#c0c0c0" stroke-width="1"/><path d="M3.300 5.600c4.500 0 4 6.800 9.800 6.800" fill="none" stroke="#c0c0c0" stroke-width="1.100"/></g></svg>
<div style="left:2px;top:791.5px;width:531px;height:1px;background:#2a2a2a;"></div>
<svg style="left:6px;top:798px;" width="13" height="9" viewBox="0 0 13 9"><g transform="translate(0.5 0.5)"><path d="M.5 4C2.200 1.500 4 .6 6 .6S9.800 1.500 11.500 4C9.800 6.500 8 7.400 6 7.400S2.200 6.500.5 4z" fill="none" stroke="#c0c0c0" stroke-width="1.100"/><circle cx="6" cy="4" r="1.900" fill="#c0c0c0"/></g></svg>
<svg style="left:21px;top:796px;" width="13" height="13" viewBox="0 0 13 13"><g transform="translate(0.5 0.5)"><path d="M0 4h2.500L6 .5v11L2.500 8H0z" fill="#c0c0c0"/><path d="M7.500 3.500a3.500 3.500 0 0 1 0 5M9 1.500a6 6 0 0 1 0 9" fill="none" stroke="#c0c0c0" stroke-width="1"/></g></svg>
<svg style="left:39px;top:799px;" width="7" height="7" viewBox="0 0 7 7"><circle cx="3.500" cy="3.500" r="3.200" fill="#c0c0c0"/></svg>
<svg style="left:53px;top:796px;" width="9" height="12" viewBox="0 0 9 12"><g transform="translate(0 0.5)"><path d="M2 5V3.200a2.500 2.500 0 0 1 5 0V5" fill="none" stroke="#c0c0c0" stroke-width="1.300"/><path d="M.5 5h8v5.500h-8z" fill="#c0c0c0"/></g></svg>
<div style="left:69.7px;top:797px;width:1px;height:11px;background:#0f0f0f;"></div>
<div style="left:100.7px;top:797px;width:1px;height:11px;background:#0f0f0f;"></div>
<div style="left:133.7px;top:797px;width:1px;height:11px;background:#0f0f0f;"></div>
<div style="left:263.7px;top:797px;width:1px;height:11px;background:#0f0f0f;"></div>
<div style="left:400.7px;top:797px;width:1px;height:11px;background:#0f0f0f;"></div>
<div style="left:517.7px;top:797px;width:1px;height:11px;background:#0f0f0f;"></div>
<svg style="left:82px;top:796px;" width="14" height="13" viewBox="0 0 14 13"><g transform="translate(0.5 0.0)"><path d="M.5.500h6l6 6-5.500 5.500-6.500-6.500z" fill="#c0c0c0"/><circle cx="3.500" cy="3.500" r="1.200" fill="#232323"/></g></svg>
<span class="t" style="left:107px;top:795.0px;color:#9a9a9a;font-size:9.5px;">#</span>
<span class="t" style="left:140px;top:795.1px;color:#aaaaaa;font-size:9.5px;transform:scaleX(0.966);">Layer Name</span>
<svg style="left:269px;top:797px;" width="12" height="11" viewBox="0 0 12 11"><g transform="translate(0.0 0.5)"><g transform="scale(1.0)"><path d="M.8 6a5.200 5.200 0 0 1 10.400 0z" fill="#c0c0c0"/><path d="M6 1v5M3.400 6V3.400M8.600 6V3.400" stroke="#232323" stroke-width=".8"/><path d="M0 9h3.300V7.300h1.400V6.500h2.600v.8h1.400V9H12v1H0z" fill="#c0c0c0"/></g></g></svg>
<svg style="left:285px;top:797px;" width="10" height="11" viewBox="0 0 10 11"><g transform="translate(0 0.5)"><circle cx="5" cy="5" r="2.400" fill="none" stroke="#c0c0c0" stroke-width="1.100"/><path d="M5 0v2M5 8v2M0 5h2M8 5h2M1.500 1.500l1.400 1.400M7.100 7.100l1.400 1.400M8.500 1.500L7.100 2.900M2.900 7.100L1.500 8.500" stroke="#c0c0c0" stroke-width="1"/></g></svg>
<svg style="left:299px;top:797px;" width="12" height="11" viewBox="0 0 12 11"><path d="M.5.500l2 2M3.500 3.500l2 2M6.500 6.500l2 2M9.500 9.500l1.500 1.500" stroke="#c0c0c0" stroke-width="1.600"/></svg>
<span class="w" style="left:314.0px;top:793.7px;color:#c8c8c8;font-family:'DejaVu Serif',serif;font-style:italic;font-size:12.5px;letter-spacing:-0.4px;line-height:16px;">fx</span>
<svg style="left:329px;top:796px;" width="13" height="13" viewBox="0 0 13 13"><g transform="translate(0 0.8)"><g transform="scale(.86 .8)"><path d="M0 3.500h3.800v8.200h5.700V14H0z" fill="#c0c0c0"/><path d="M1.500 4.500v8" stroke="#232323" stroke-width=".9" stroke-dasharray="1 1"/><rect x="4.700" y="0" width="9.400" height="11" fill="#c0c0c0"/><path d="M5.900 .6v10M12.900 .6v10" stroke="#232323" stroke-width="1" stroke-dasharray="1 1"/><path d="M7.600 5.500h3.600" stroke="#232323" stroke-width="1"/></g></g></svg>
<svg style="left:344px;top:796px;" width="13" height="13" viewBox="0 0 13 13"><g transform="translate(0 0.7)"><g transform="scale(.88 .82)"><circle cx="4.900" cy="9.300" r="4.400" fill="none" stroke="#c0c0c0" stroke-width="1.100"/><circle cx="6.300" cy="7.900" r="4.400" fill="#232323" stroke="#c0c0c0" stroke-width="1.100"/><circle cx="7.700" cy="6.500" r="4.400" fill="#232323" stroke="#c0c0c0" stroke-width="1.100"/><circle cx="9.300" cy="4.900" r="4.400" fill="#6a6a6a" stroke="#c0c0c0" stroke-width="1.100"/></g></g></svg>
<svg style="left:359px;top:797px;" width="12" height="11" viewBox="0 0 12 11"><g transform="translate(0.5 0.0)"><circle cx="5.500" cy="5.500" r="4.900" fill="none" stroke="#c0c0c0" stroke-width="1.100"/><path d="M2 9A4.900 4.900 0 0 0 9 2z" fill="#c0c0c0"/></g></svg>
<svg style="left:375px;top:797px;" width="11" height="11" viewBox="0 0 11 11"><g transform="translate(0.8 0.8)"><path d="M4.750.5l3.900 2v4.500l-3.900 2.100-3.900-2.100V2.500z" fill="none" stroke="#c0c0c0" stroke-width=".95"/><path d="M.85 2.500l3.900 2 3.900-2M4.750 4.500v4.600" fill="none" stroke="#c0c0c0" stroke-width=".95"/></g></svg>
<span class="t" style="left:407px;top:795.1px;color:#aaaaaa;font-size:9.5px;transform:scaleX(0.952);">Parent &amp; Link</span>
<div style="left:2px;top:811.7px;width:532px;height:16.8px;background:#1e1e1e;"></div>
<div style="left:2px;top:812px;width:532px;height:16px;background:#484848;"></div>
<div style="left:6px;top:813px;width:13px;height:14px;background:#393939;"></div>
<svg style="left:6px;top:816px;" width="13" height="8" viewBox="0 0 13 8"><g transform="translate(0.5 0)"><path d="M.5 4C2.200 1.500 4 .6 6 .6S9.800 1.500 11.500 4C9.800 6.500 8 7.400 6 7.400S2.200 6.500.5 4z" fill="none" stroke="#c4c4c4" stroke-width="1.100"/><circle cx="6" cy="4" r="1.900" fill="#c4c4c4"/></g></svg>
<div style="left:36px;top:813px;width:13px;height:14px;background:#393939;"></div>
<div style="left:51px;top:813px;width:13px;height:14px;background:#393939;"></div>
<svg style="left:74px;top:815px;" width="7" height="10" viewBox="0 0 7 10"><g transform="translate(0.75 0.8)"><path d="M1 1l3.5 3.5l-3.5 3.5" fill="none" stroke="#a0a0a0" stroke-width="1.1"/></g></svg>
<div style="left:87px;top:814px;width:12px;height:12px;background:#6b7de0;"></div>
<span class="t" style="left:108.5px;top:810.8px;color:#c4c4c4;font-size:10.5px;">1</span>
<svg style="left:137px;top:814px;" width="13" height="12" viewBox="0 0 13 12"><g transform="translate(0.8 0.3)"><polygon points="5.70,0.00 7.11,3.76 11.12,3.94 7.98,6.44 9.05,10.31 5.70,8.09 2.35,10.31 3.42,6.44 0.28,3.94 4.29,3.76" fill="#d8d8d8"/></g></svg>
<div style="left:153px;top:812px;width:111px;height:16px;background:#a8a8a8;"></div>
<span class="t" style="left:157.5px;top:812.0px;color:#1a1a1a;transform:scaleX(0.954);">Edge</span>
<div style="left:269px;top:813px;width:13px;height:14px;background:#393939;"></div>
<div style="left:284px;top:813px;width:13px;height:14px;background:#393939;"></div>
<div style="left:299px;top:813px;width:13px;height:14px;background:#393939;"></div>
<div style="left:314px;top:813px;width:13px;height:14px;background:#393939;"></div>
<svg style="left:269px;top:815px;" width="13" height="10" viewBox="0 0 13 10"><g transform="translate(0.5 0.0)"><g transform="scale(1.0)"><path d="M.8 6a5.200 5.200 0 0 1 10.400 0z" fill="#c8c8c8"/><path d="M6 1v5M3.400 6V3.400M8.600 6V3.400" stroke="#232323" stroke-width=".8"/><path d="M0 9h3.300V7.300h1.400V6.500h2.600v.8h1.400V9H12v1H0z" fill="#c8c8c8"/></g></g></svg>
<svg style="left:285px;top:815px;" width="11" height="10" viewBox="0 0 11 10"><g transform="translate(0.5 0)"><circle cx="5" cy="5" r="2.200" fill="none" stroke="#707070" stroke-width="1"/><path d="M5 .3v1.700M5 8v1.700M.3 5h1.700M8 5h1.700M1.700 1.700l1.200 1.200M7.100 7.100l1.200 1.200M8.300 1.700L7.100 2.900M2.900 7.100L1.700 8.300" stroke="#707070" stroke-width=".9"/></g></svg>
<svg style="left:300px;top:814px;" width="11" height="12" viewBox="0 0 11 12"><g transform="translate(0 0.5)"><path d="M.8 10.200L10.200.8" stroke="#d0d0d0" stroke-width="1.200"/></g></svg>
<span class="w" style="left:314.0px;top:811.2px;color:#d0d0d0;font-family:'DejaVu Serif',serif;font-style:italic;font-size:12.5px;letter-spacing:-0.4px;line-height:16px;">fx</span>
<div style="left:344px;top:813px;width:13px;height:14px;background:#393939;"></div>
<div style="left:359px;top:813px;width:13px;height:14px;background:#393939;"></div>
<div style="left:374px;top:813px;width:13px;height:14px;background:#393939;"></div>
<svg style="left:406px;top:813px;" width="13" height="13" viewBox="0 0 13 13"><g transform="translate(0.5 0.7)"><path d="M6 7A1.100 1.100 0 0 1 6 4.800A2.300 2.300 0 0 1 6 9.400A3.800 3.800 0 0 1 6 1.800A4.700 4.700 0 0 1 10.300 8.500" fill="none" stroke="#b8b8b8" stroke-width="1.050"/></g></svg>
<div style="left:425px;top:813px;width:89px;height:14px;background:#1f1f1f;"></div>
<span class="t" style="left:432px;top:812.0px;color:#d0d0d0;transform:scaleX(0.951);">None</span>
<svg style="left:501px;top:817px;" width="9" height="7" viewBox="0 0 9 7"><g transform="translate(0.0 0.55)"><path d="M1 1l3.5 3.5l3.5 -3.5" fill="none" stroke="#c4c4c4" stroke-width="1.2"/></g></svg>
<div style="left:2px;top:828.7px;width:532px;height:16.8px;background:#1e1e1e;"></div>
<div style="left:2px;top:829px;width:532px;height:16px;background:#2f2f2f;"></div>
<div style="left:6px;top:830px;width:13px;height:14px;background:#232323;"></div>
<svg style="left:6px;top:833px;" width="13" height="8" viewBox="0 0 13 8"><g transform="translate(0.5 0)"><path d="M.5 4C2.200 1.500 4 .6 6 .6S9.800 1.500 11.500 4C9.800 6.500 8 7.400 6 7.400S2.200 6.500.5 4z" fill="none" stroke="#c4c4c4" stroke-width="1.100"/><circle cx="6" cy="4" r="1.900" fill="#c4c4c4"/></g></svg>
<div style="left:36px;top:830px;width:13px;height:14px;background:#232323;"></div>
<div style="left:51px;top:830px;width:13px;height:14px;background:#232323;"></div>
<svg style="left:74px;top:832px;" width="7" height="10" viewBox="0 0 7 10"><g transform="translate(0.75 0.8)"><path d="M1 1l3.5 3.5l-3.5 3.5" fill="none" stroke="#a0a0a0" stroke-width="1.1"/></g></svg>
<div style="left:87px;top:831px;width:12px;height:12px;background:#6b7de0;"></div>
<span class="t" style="left:108.5px;top:827.8px;color:#c4c4c4;font-size:10.5px;">2</span>
<svg style="left:137px;top:831px;" width="13" height="12" viewBox="0 0 13 12"><g transform="translate(0.8 0.3)"><polygon points="5.70,0.00 7.11,3.76 11.12,3.94 7.98,6.44 9.05,10.31 5.70,8.09 2.35,10.31 3.42,6.44 0.28,3.94 4.29,3.76" fill="#d8d8d8"/></g></svg>
<span class="t" style="left:157.5px;top:829.0px;color:#d0d0d0;transform:scaleX(1.049);">Main</span>
<div style="left:269px;top:830px;width:13px;height:14px;background:#232323;"></div>
<div style="left:284px;top:830px;width:13px;height:14px;background:#232323;"></div>
<div style="left:299px;top:830px;width:13px;height:14px;background:#232323;"></div>
<div style="left:314px;top:830px;width:13px;height:14px;background:#232323;"></div>
<svg style="left:269px;top:832px;" width="13" height="10" viewBox="0 0 13 10"><g transform="translate(0.5 0.0)"><g transform="scale(1.0)"><path d="M.8 6a5.200 5.200 0 0 1 10.400 0z" fill="#c8c8c8"/><path d="M6 1v5M3.400 6V3.400M8.600 6V3.400" stroke="#232323" stroke-width=".8"/><path d="M0 9h3.300V7.300h1.400V6.500h2.600v.8h1.400V9H12v1H0z" fill="#c8c8c8"/></g></g></svg>
<svg style="left:285px;top:832px;" width="11" height="10" viewBox="0 0 11 10"><g transform="translate(0.5 0)"><circle cx="5" cy="5" r="2.200" fill="none" stroke="#707070" stroke-width="1"/><path d="M5 .3v1.700M5 8v1.700M.3 5h1.700M8 5h1.700M1.700 1.700l1.200 1.200M7.100 7.100l1.200 1.200M8.300 1.700L7.100 2.900M2.900 7.100L1.700 8.300" stroke="#707070" stroke-width=".9"/></g></svg>
<svg style="left:300px;top:831px;" width="11" height="12" viewBox="0 0 11 12"><g transform="translate(0 0.5)"><path d="M.8 10.200L10.200.8" stroke="#d0d0d0" stroke-width="1.200"/></g></svg>
<span class="w" style="left:314.0px;top:828.2px;color:#d0d0d0;font-family:'DejaVu Serif',serif;font-style:italic;font-size:12.5px;letter-spacing:-0.4px;line-height:16px;">fx</span>
<div style="left:344px;top:830px;width:13px;height:14px;background:#232323;"></div>
<div style="left:359px;top:830px;width:13px;height:14px;background:#232323;"></div>
<div style="left:374px;top:830px;width:13px;height:14px;background:#232323;"></div>
<svg style="left:406px;top:830px;" width="13" height="13" viewBox="0 0 13 13"><g transform="translate(0.5 0.7)"><path d="M6 7A1.100 1.100 0 0 1 6 4.800A2.300 2.300 0 0 1 6 9.400A3.800 3.800 0 0 1 6 1.800A4.700 4.700 0 0 1 10.300 8.500" fill="none" stroke="#b8b8b8" stroke-width="1.050"/></g></svg>
<div style="left:425px;top:830px;width:89px;height:14px;background:#1f1f1f;"></div>
<span class="t" style="left:432px;top:829.0px;color:#d0d0d0;transform:scaleX(0.951);">None</span>
<svg style="left:501px;top:834px;" width="9" height="7" viewBox="0 0 9 7"><g transform="translate(0.0 0.55)"><path d="M1 1l3.5 3.5l3.5 -3.5" fill="none" stroke="#c4c4c4" stroke-width="1.2"/></g></svg>
<div style="left:534px;top:791px;width:1.2px;height:221.5px;background:#0d0d0d;"></div>
<div style="left:535.5px;top:762px;width:6.2px;height:250px;background:#242424;"></div>
<div style="left:541.7px;top:811.5px;width:1036.3px;height:200.5px;background:#303030;"></div>
<div style="left:535.2px;top:812px;width:6.5px;height:16px;background:#484848;"></div>
<div style="left:535.2px;top:829px;width:6.5px;height:16px;background:#2f2f2f;"></div>
<div style="left:541.7px;top:762.5px;width:1036.3px;height:8.5px;background:#6c6c6c;"></div>
<svg style="left:534px;top:762px;" width="8" height="9" viewBox="0 0 8 9"><g transform="translate(0.8 0.5)"><path d="M6.500 0H5.500A5 5 0 0 0 .5 5v3.500H6.500z" fill="#2d8ceb"/></g></svg>
<svg style="left:1578px;top:762px;" width="8" height="9" viewBox="0 0 8 9"><g transform="translate(0 0.5)"><path d="M0 0h1.500A5.500 5.500 0 0 1 7 5.500v3H0z" fill="#2d8ceb"/></g></svg>
<div style="left:610.8px;top:764px;width:1.2px;height:6.5px;background:#3f86d0;"></div>
<div style="left:535.5px;top:771px;width:1050px;height:20px;background:#232323;"></div>
<div style="left:535.5px;top:771px;width:1050px;height:1px;background:#151515;"></div>
<div style="left:535.500px;top:771px;width:1049.500px;height:20px;overflow:hidden;">
<div style="left:6.600000000000046px;top:15px;width:1px;height:5px;background:#8a8a8a;"></div>
<span class="t" style="left:-2.8px;top:0.0px;color:#b4b4b4;transform:scaleX(0.93);">0:00f</span>
<div style="left:75.69000000000008px;top:15px;width:1px;height:5px;background:#8a8a8a;"></div>
<span class="t" style="left:66.2px;top:0.0px;color:#b4b4b4;transform:scaleX(0.93);">10f</span>
<div style="left:144.78000000000011px;top:15px;width:1px;height:5px;background:#8a8a8a;"></div>
<span class="t" style="left:135.3px;top:0.0px;color:#b4b4b4;transform:scaleX(0.93);">20f</span>
<div style="left:213.87000000000003px;top:15px;width:1px;height:5px;background:#8a8a8a;"></div>
<span class="t" style="left:197.2px;top:0.0px;color:#b4b4b4;transform:scaleX(0.93);">01:00f</span>
<div style="left:282.96000000000004px;top:15px;width:1px;height:5px;background:#8a8a8a;"></div>
<span class="t" style="left:273.4px;top:0.0px;color:#b4b4b4;transform:scaleX(0.93);">10f</span>
<div style="left:352.05000000000007px;top:15px;width:1px;height:5px;background:#8a8a8a;"></div>
<span class="t" style="left:342.5px;top:0.0px;color:#b4b4b4;transform:scaleX(0.93);">20f</span>
<div style="left:421.14px;top:15px;width:1px;height:5px;background:#8a8a8a;"></div>
<span class="t" style="left:404.5px;top:0.0px;color:#b4b4b4;transform:scaleX(0.93);">02:00f</span>
<div style="left:490.2299999999999px;top:15px;width:1px;height:5px;background:#8a8a8a;"></div>
<span class="t" style="left:480.7px;top:0.0px;color:#b4b4b4;transform:scaleX(0.93);">10f</span>
<div style="left:559.32px;top:15px;width:1px;height:5px;background:#8a8a8a;"></div>
<span class="t" style="left:549.8px;top:0.0px;color:#b4b4b4;transform:scaleX(0.93);">20f</span>
<div style="left:628.4100000000002px;top:15px;width:1px;height:5px;background:#8a8a8a;"></div>
<span class="t" style="left:611.8px;top:0.0px;color:#b4b4b4;transform:scaleX(0.93);">03:00f</span>
<div style="left:697.5000000000001px;top:15px;width:1px;height:5px;background:#8a8a8a;"></div>
<span class="t" style="left:688.0px;top:0.0px;color:#b4b4b4;transform:scaleX(0.93);">10f</span>
<div style="left:766.59px;top:15px;width:1px;height:5px;background:#8a8a8a;"></div>
<span class="t" style="left:757.1px;top:0.0px;color:#b4b4b4;transform:scaleX(0.93);">20f</span>
<div style="left:835.6800000000002px;top:15px;width:1px;height:5px;background:#8a8a8a;"></div>
<span class="t" style="left:819.1px;top:0.0px;color:#b4b4b4;transform:scaleX(0.93);">04:00f</span>
<div style="left:904.7700000000001px;top:15px;width:1px;height:5px;background:#8a8a8a;"></div>
<span class="t" style="left:895.3px;top:0.0px;color:#b4b4b4;transform:scaleX(0.93);">10f</span>
<div style="left:973.86px;top:15px;width:1px;height:5px;background:#8a8a8a;"></div>
<span class="t" style="left:964.3px;top:0.0px;color:#b4b4b4;transform:scaleX(0.93);">20f</span>
<div style="left:1042.9500000000003px;top:15px;width:1px;height:5px;background:#8a8a8a;"></div>
<span class="t" style="left:1026.1px;top:0.0px;color:#b4b4b4;transform:scaleX(0.93);">05:00f</span>
</div>
<div style="left:535.5px;top:790.5px;width:1050px;height:1.5px;background:#121212;"></div>
<div style="left:541.7px;top:792.5px;width:1036.3px;height:14.5px;background:#636363;"></div>
<svg style="left:535px;top:792px;" width="7" height="15" viewBox="0 0 7 15"><g transform="translate(0.2 0.5)"><path d="M6.500 0H4.500A4 4 0 0 0 .5 4v6.500a4 4 0 0 0 4 4H6.500z" fill="#2d8ceb"/></g></svg>
<svg style="left:1578px;top:792px;" width="7" height="15" viewBox="0 0 7 15"><g transform="translate(0 0.5)"><path d="M0 0h2a4 4 0 0 1 4 4v6.500a4 4 0 0 1-4 4H0z" fill="#2d8ceb"/></g></svg>
<div style="left:541.7px;top:807.5px;width:1036.3px;height:3.5px;background:#1fc41f;"></div>
<div style="left:541.7px;top:807px;width:1036.3px;height:0.8px;background:#1a1a1a;"></div>
<div style="left:541.7px;top:812px;width:1036.3px;height:16.3px;background:linear-gradient(#7384e2,#5c6dd3 45%,#5363c8);"></div>
<div style="left:541.7px;top:812px;width:1px;height:16.3px;background:#d8dcf5;"></div>
<div style="left:541.7px;top:828.3px;width:1036.3px;height:0.9px;background:#23232e;"></div>
<div style="left:541.7px;top:829.2px;width:1036.3px;height:16px;background:#535d8e;"></div>
<div style="left:1578px;top:812px;width:7px;height:16.5px;background:#474747;"></div>
<div style="left:1578px;top:828.5px;width:7px;height:16.5px;background:#303030;"></div>
<svg style="left:1589px;top:794px;" width="12" height="14" viewBox="0 0 12 14"><path d="M0 0h11.500v9.500L5.750 14 0 9.500z" fill="#9c9c9c"/></svg>
<svg style="left:1585px;top:813px;" width="16" height="15" viewBox="0 0 16 15"><g transform="translate(0.5 0.5)"><path d="M8 1.200L.9 8.800h4" fill="none" stroke="#c8c8c8" stroke-width="1"/><path d="M8 3.300h6.500v7h-6z" fill="#c8c8c8"/><circle cx="7" cy="10" r="2.700" fill="#2a2a2a" stroke="#c8c8c8" stroke-width="1.100"/></g></svg>
<div style="left:610.8px;top:778px;width:1.2px;height:234px;background:#2f8aea;"></div>
<svg style="left:605px;top:777px;" width="12" height="15" viewBox="0 0 12 15"><g transform="translate(0.9 0.4)"><path d="M1 0h9a.8 .8 0 0 1 .8 .8v5L5.500 13.300.2 5.800V.8A.8 .8 0 0 1 1 0z" fill="#2d8ceb"/><path d="M4 6.200h3L5.500 8.200z" fill="#1a3550"/></g></svg>
<div style="left:0px;top:1012.4px;width:642px;height:1.2px;background:#0a0a0a;"></div>
<div style="left:1585px;top:1013px;width:1px;height:17px;background:#1c1c1c;"></div>
<div style="left:6.5px;top:1015px;width:16px;height:14.5px;background:#1c1c1c;border:1px solid #323232;border-radius:1px;"></div>
<svg style="left:9px;top:1017px;" width="12" height="12" viewBox="0 0 12 12"><rect x=".6" y=".6" width="7.500" height="7" rx="1" fill="none" stroke="#2d8ceb" stroke-width="1.200"/><rect x="3.400" y="3.400" width="7.800" height="7.500" rx="1" fill="#1c1c1c" stroke="#2d8ceb" stroke-width="1.200"/><path d="M6 6h2.600v2.400H6z" fill="#2d8ceb"/></svg>
<svg style="left:27px;top:1016px;" width="13" height="13" viewBox="0 0 13 13"><circle cx="5" cy="5" r="4.300" fill="none" stroke="#c0c0c0" stroke-width="1.200"/><rect x="5.500" y="5.500" width="6.500" height="6.500" fill="#232323" stroke="#c0c0c0" stroke-width="1.200"/></svg>
<svg style="left:46px;top:1015px;" width="13" height="14" viewBox="0 0 13 14"><g transform="translate(0.5 0.5)"><path d="M3.500.5C2 .5 2 2 2 3.500S1.500 6 .5 6.500C1.500 7 2 8 2 9.500s0 3 1.500 3M8.500.5C10 .5 10 2 10 3.500s.5 2.500 1.500 3C10.500 7 10 8 10 9.500s0 3-1.500 3" fill="none" stroke="#c0c0c0" stroke-width="1.100"/><path d="M3.500 2.500h5v8h-5z" fill="#c0c0c0"/></g></svg>
<svg style="left:64px;top:1016px;" width="15" height="12" viewBox="0 0 15 12"><g transform="translate(0.5 0)"><ellipse cx="5.500" cy="6" rx="5" ry="4" fill="#c0c0c0"/><path d="M9 3.500l3-2.500M10 5.500l3.500-1" stroke="#c0c0c0" stroke-width="1"/><path d="M1 10.500h10" stroke="#c0c0c0" stroke-width="1.200"/></g></svg>
<span class="t" style="left:107px;top:1014.0px;color:#b8b8b8;transform:scaleX(1.001);">Frame Render Time:</span>
<span class="t" style="left:213px;top:1014.0px;color:#3fd6a6;transform:scaleX(1.011);">2ms</span>
<div style="left:267px;top:1015px;width:134.5px;height:14.5px;background:#262626;border:1px solid #363636;border-radius:2px;"></div>
<span class="t" style="left:272px;top:1014.0px;color:#b0b0b0;transform:scaleX(1.007);">Toggle Switches / Modes</span>
<svg style="left:540px;top:1019px;" width="11" height="5" viewBox="0 0 11 5"><g transform="translate(0.4 0)"><path d="M0 4.500L2.800 1.500l1.500 1.500L6.300 0l3.700 4.500z" fill="#c0c0c0"/></g></svg>
<svg style="left:561px;top:1018px;" width="10" height="10" viewBox="0 0 10 10"><circle cx="5" cy="5" r="4" fill="#2a2a2a" stroke="#a4a4a4" stroke-width="1.600"/></svg>
<div style="left:571px;top:1020.5px;width:38px;height:2px;background:#3a3a3a;"></div>
<svg style="left:620px;top:1018px;" width="18" height="7" viewBox="0 0 18 7"><g transform="translate(0.8 0.7)"><path d="M0 6.300L4.200 1.800l1.300 1.400L3 6.300zM5 6.300L10.500 0l6 6.300z" fill="#c0c0c0"/></g></svg>
<div style="left:571px;top:382px;width:514px;height:321px;background:#232323;border-radius:8px;overflow:hidden;box-shadow:0 0 0 1px #4a4a4a,0 3px 20px rgba(0,0,0,.32);">
<div style="left:0px;top:0px;width:514px;height:30px;background:#eff6de;"></div>
<span class="w" style="left:9px;top:7.0px;color:#1a1a1a;font-size:12.5px;transform:scaleX(0.955);">Color 2</span>
<svg style="left:493px;top:8px;" width="12" height="13" viewBox="0 0 12 13"><g transform="translate(0 0.5)"><path d="M.8.800l10.400 10.400M11.200.800L.8 11.200" stroke="#222" stroke-width="1.100"/></g></svg>
</div>
<div style="left:588.5px;top:430px;width:256.5px;height:256px;background:linear-gradient(to top,#000,rgba(0,0,0,0)),linear-gradient(to right,#fff,#00d9ff);"></div>
<svg style="left:792px;top:490px;" width="12" height="12" viewBox="0 0 12 12"><circle cx="6" cy="6" r="5" fill="none" stroke="#0a262c" stroke-width="1.100"/></svg>
<div style="left:859px;top:430px;width:18px;height:256px;background:linear-gradient(to bottom,#f00 0%,#f0f 16.670%,#00f 33.330%,#0ff 50%,#0f0 66.670%,#ff0 83.330%,#f00 100%);"></div>
<svg style="left:851px;top:548px;" width="5" height="9" viewBox="0 0 5 9"><path d="M.8.800l3.400 3.700L.8 8.200" fill="none" stroke="#b0b0b0" stroke-width="1.100"/></svg>
<svg style="left:879px;top:548px;" width="6" height="9" viewBox="0 0 6 9"><g transform="translate(0.5 0)"><path d="M4.200.800L.8 4.500l3.400 3.700" fill="none" stroke="#b0b0b0" stroke-width="1.100"/></g></svg>
<div style="left:892.5px;top:430px;width:60.5px;height:34px;background:#22a6bd;"></div>
<div style="left:892.5px;top:464px;width:60.5px;height:34px;background:#00ff00;"></div>
<svg style="left:894px;top:511px;" width="13" height="13" viewBox="0 0 13 13"><g transform="translate(0.2 0.5)"><circle cx="6" cy="6" r="5.500" fill="#9a9a9a"/></g></svg>
<span class="t" style="left:911px;top:509.79999999999995px;color:#b4b4b4;font-size:10.5px;">H:</span>
<span class="t" style="left:923px;top:508.0px;color:#2d8ceb;">189</span>
<span class="t" style="left:945px;top:508.0px;color:#b4b4b4;font-size:8px;">°</span>
<svg style="left:893px;top:533px;" width="15" height="15" viewBox="0 0 15 15"><g transform="translate(0.2 0.5)"><circle cx="7" cy="7" r="5.700" fill="none" stroke="#ababab" stroke-width="1.900"/></g></svg>
<span class="t" style="left:911px;top:532.8px;color:#b4b4b4;font-size:10.5px;">S:</span>
<span class="t" style="left:923px;top:531.0px;color:#2d8ceb;">82</span>
<span class="t" style="left:940px;top:532.0px;color:#b4b4b4;font-size:10px;">%</span>
<svg style="left:893px;top:556px;" width="15" height="15" viewBox="0 0 15 15"><g transform="translate(0.2 0.5)"><circle cx="7" cy="7" r="5.700" fill="none" stroke="#ababab" stroke-width="1.900"/></g></svg>
<span class="t" style="left:911px;top:555.8px;color:#b4b4b4;font-size:10.5px;">B:</span>
<span class="t" style="left:923px;top:554.0px;color:#2d8ceb;">74</span>
<span class="t" style="left:940px;top:555.0px;color:#b4b4b4;font-size:10px;">%</span>
<svg style="left:893px;top:585px;" width="15" height="15" viewBox="0 0 15 15"><g transform="translate(0.2 0.5)"><circle cx="7" cy="7" r="5.700" fill="none" stroke="#ababab" stroke-width="1.900"/></g></svg>
<span class="t" style="left:911px;top:584.8px;color:#b4b4b4;font-size:10.5px;">R:</span>
<span class="t" style="left:923px;top:583.0px;color:#2d8ceb;">34</span>
<svg style="left:893px;top:608px;" width="15" height="15" viewBox="0 0 15 15"><g transform="translate(0.2 0.5)"><circle cx="7" cy="7" r="5.700" fill="none" stroke="#ababab" stroke-width="1.900"/></g></svg>
<span class="t" style="left:911px;top:607.8px;color:#b4b4b4;font-size:10.5px;">G:</span>
<span class="t" style="left:923px;top:606.0px;color:#2d8ceb;">166</span>
<svg style="left:893px;top:631px;" width="15" height="15" viewBox="0 0 15 15"><g transform="translate(0.2 0.5)"><circle cx="7" cy="7" r="5.700" fill="none" stroke="#ababab" stroke-width="1.900"/></g></svg>
<span class="t" style="left:911px;top:630.8px;color:#b4b4b4;font-size:10.5px;">B:</span>
<span class="t" style="left:923px;top:629.0px;color:#2d8ceb;">189</span>
<span class="t" style="left:889px;top:659.0px;color:#9a9a9a;font-size:10.5px;">#</span>
<div style="left:897px;top:657px;width:59.5px;height:19.5px;background:#f2f5ff;border:1.500px solid #3f86e0;border-radius:3.500px;"></div>
<span class="t" style="left:903px;top:658.8px;color:#1a1a1a;transform:scaleX(0.964);">22A6BD</span>
<div style="left:942.8px;top:660px;width:1px;height:13.5px;background:#111;"></div>
<div style="left:880px;top:649px;width:93px;height:32.6px;border:3px solid #c3e62c;"></div>
<div style="left:983px;top:424px;width:90px;height:20.3px;border:1.500px solid #cdcdcd;border-radius:10.500px;"></div>
<span class="t" style="left:1019px;top:426.3px;color:#ffffff;transform:scaleX(1.007);">OK</span>
<div style="left:983px;top:454px;width:90px;height:20.2px;border:1.200px solid #828282;border-radius:10.500px;"></div>
<span class="t" style="left:1011px;top:456.3px;color:#b0b0b0;transform:scaleX(0.964);">Cancel</span>
<div style="left:983px;top:521.3px;width:21.6px;height:21px;background:#1d1d1d;border:1px solid #3a3a3a;border-radius:2px;"></div>
<svg style="left:987px;top:524px;" width="14" height="15" viewBox="0 0 14 15"><g transform="translate(0 0.5)"><path d="M9.500 1.200a2 2 0 0 1 2.900 2.900L10.600 5.900l.7.700-1.100 1.100-4.100-4.100 1.100-1.100.7.700z" fill="#e0e0e0"/><path d="M7 5.500L2 10.500l-.7 2.300 2.300-.7 5-5" fill="none" stroke="#e0e0e0" stroke-width="1"/></g></svg>
<div style="left:983.2px;top:552.8px;width:14px;height:14.2px;background:#a6a6a6;border-radius:2px;"></div>
<svg style="left:983px;top:553px;" width="14" height="14" viewBox="0 0 14 14"><g transform="translate(0.5 0)"><path d="M3 6.800l2.700 2.700 5-5.800" fill="none" stroke="#232323" stroke-width="1.700"/></g></svg>
<span class="t" style="left:1001.5px;top:552.0px;color:#b0b0b0;transform:scaleX(1.035);">Preview</span>
</div></body></html>
